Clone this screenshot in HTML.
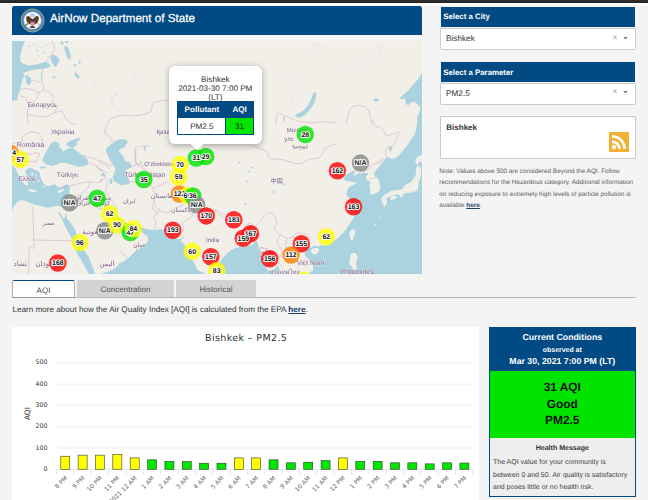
<!DOCTYPE html>
<html lang="en"><head><meta charset="utf-8"><title>AirNow Department of State</title>
<style>
html,body{margin:0;padding:0;}
*{text-rendering:geometricPrecision;}
svg text{text-rendering:geometricPrecision;}
body{width:648px;height:500px;overflow:hidden;background:#f4f4f4;position:relative;font-family:"Liberation Sans",Arial,sans-serif;color:#333;}
.abs{position:absolute;}
#topbar{left:0;top:0;width:648px;height:2.5px;background:#2b2b2b;}
#topwhite{left:0;top:2.5px;width:648px;height:1.9px;background:#fff;}
#topwhite2{left:11.8px;top:4.3px;width:637px;height:1.6px;background:linear-gradient(#fff,#fafafa);}
#topbar{background:linear-gradient(#2e2e2e,#2b2b2b 70%,#1c1c1c);}
#hdr{left:12px;top:6px;width:410px;height:29px;background:#024a83;border-radius:2.5px 2.5px 0 0;}
#hdr .ttl{position:absolute;left:38px;top:0;line-height:26px;font-size:11.65px;color:#fff;white-space:nowrap;-webkit-text-stroke:0.25px #fff;}
#map{left:12px;top:41px;width:410px;height:232.7px;overflow:hidden;background:#f2efe9;}
.bar{background:#024a83;color:#fff;font-weight:bold;font-size:7.85px;white-space:nowrap;}
.bar span{position:absolute;left:2.6px;top:0;}
.dd{background:#fff;border:0.5px solid #ccc;border-radius:2px;box-sizing:border-box;font-size:8.2px;color:#333;}
.dd span{position:absolute;left:4.9px;top:0;}
a{color:#1b3c6a;font-weight:bold;text-decoration:underline;}
.tab{font-size:8px;color:#555;text-align:center;line-height:17.6px;}
.tab span{display:block;}

</style></head>
<body>
<div id="topbar" class="abs"></div>
<div id="topwhite" class="abs"></div>
<div id="topwhite2" class="abs"></div>
<div id="hdr" class="abs">
<svg class="abs" style="left:8.4px;top:1.9px" width="25" height="25" viewBox="-12.5 -12.5 25 25">
<circle r="11.9" fill="#2c66ad"/><circle r="11.5" fill="none" stroke="#d8c84e" stroke-width="0.7"/>
<circle r="10.1" fill="none" stroke="#8fb3dc" stroke-width="1.3" stroke-dasharray="0.9 0.7" opacity="0.75"/>
<circle r="8.8" fill="#f6f7f8"/><circle r="8.9" fill="none" stroke="#b9cfe6" stroke-width="0.5"/>
<circle cx="0" cy="-4.9" r="2.3" fill="#a9cde8"/>
<path d="M-1-1.8 Q-3.6-6-6.3-3.6 Q-6.8-0.4-4.8 2.6 L-2.2 4.2 L-1.4 1 Z" fill="#5e3c1c"/>
<path d="M1-1.8 Q3.6-6 6.3-3.6 Q6.8-0.4 4.8 2.6 L2.2 4.2 L1.4 1 Z" fill="#5e3c1c"/>
<ellipse cx="0" cy="0.8" rx="1.9" ry="3.6" fill="#3a2a1c"/>
<circle cx="0" cy="-2.4" r="1.1" fill="#fff"/>
<path d="M-2 0.3 h4 v2.6 q0 1.8-2 2.5 q-2-0.7-2-2.5z" fill="#ee8a8e"/><rect x="-2" y="0.3" width="4" height="1.3" fill="#2b4fa0"/>
<path d="M-4.6 3.2 q-2.4 0.6-3 3" stroke="#3f8a3f" stroke-width="1.3" fill="none"/>
<path d="M4.6 3.2 l2.8 2.4 M5.2 2.6 l2.8 2.2" stroke="#8a8a8a" stroke-width="0.5" fill="none"/>
<path d="M-1.4 5.2 l-1.4 2.2 h5.6 l-1.4-2.2z" fill="#5a4630"/>
</svg>
<div class="ttl">AirNow Department of State</div>
</div>
<div id="map" class="abs">
<svg class="abs" style="left:0;top:0" width="410" height="232.7" viewBox="0 0 410 232.7">
<defs><filter id="bl" x="-5%" y="-5%" width="110%" height="110%"><feGaussianBlur stdDeviation="0.35"/></filter><filter id="bl2" x="-10%" y="-10%" width="120%" height="120%"><feGaussianBlur stdDeviation="0.3"/></filter></defs>
<g filter="url(#bl)">
<rect x="-5" y="-5" width="420" height="245" fill="#f2efe9"/>
<path d="M-1.4 -1.4C0.9 -11.5 10.1 -2.1 12.3 -1.4C14.5 -0.7 12.2 1.4 11.9 2.8C11.6 4.2 11.0 5.4 10.5 7.0C10.0 8.6 9.1 10.8 8.7 12.6C8.3 14.3 8.1 16.1 8.1 17.5C8.1 18.9 7.9 20.0 8.7 21.0C9.4 21.9 11.2 22.5 12.6 23.1C13.9 23.7 15.2 24.4 16.8 24.5C18.4 24.6 20.5 24.1 22.4 23.8C24.2 23.4 26.0 22.8 28.0 22.4C30.0 21.9 32.6 20.7 34.3 21.0C35.9 21.3 37.5 23.2 38.0 24.1C38.6 24.9 38.7 25.3 37.5 25.9C36.3 26.5 33.1 27.2 30.8 27.7C28.5 28.1 26.1 28.2 23.8 28.5C21.4 28.9 18.5 29.4 16.8 29.9C15.0 30.4 13.5 31.0 13.3 31.5C13.1 32.0 15.0 32.3 15.4 32.9C15.8 33.4 15.2 34.3 15.7 35.0C16.1 35.6 17.6 35.7 18.2 36.6C18.8 37.6 19.4 39.3 19.3 40.6C19.2 41.8 18.2 43.7 17.5 44.1C16.8 44.4 15.7 43.5 15.1 42.7C14.5 41.8 13.9 40.2 13.7 39.2C13.5 38.1 14.4 36.8 14.0 36.4C13.6 35.9 11.8 35.9 11.2 36.6C10.5 37.3 10.5 39.2 10.1 40.6C9.7 41.9 9.0 43.4 8.7 44.8C8.3 46.2 8.6 47.3 8.1 49.0C7.6 50.6 6.1 52.9 5.6 54.5C5.1 56.2 6.1 57.9 5.3 58.7C4.6 59.6 2.2 59.3 1.1 59.4C-0.0 59.6 -1.0 69.6 -1.4 59.4C-1.8 49.3 -3.7 8.7 -1.4 -1.4Z" fill="#aad3df"/>
<path d="M38.5 15.4C38.8 14.2 40.8 13.9 42.0 14.0C43.1 14.1 44.5 15.0 45.5 16.1C46.4 17.1 47.6 19.1 47.6 20.3C47.6 21.4 46.0 22.1 45.5 23.1C44.9 24.0 44.6 25.6 44.1 25.9C43.5 26.1 42.7 25.3 42.0 24.5C41.3 23.7 40.4 22.5 39.9 21.0C39.3 19.5 38.1 16.6 38.5 15.4Z" fill="#aad3df"/>
<path d="M52.4 6.3C52.7 5.1 54.4 5.0 55.2 5.6C56.1 6.2 56.8 8.3 57.3 9.8C57.9 11.3 58.6 13.3 58.7 14.7C58.9 16.1 58.5 17.7 58.0 18.2C57.6 18.6 56.6 18.4 55.9 17.5C55.2 16.6 54.4 14.5 53.8 12.6C53.3 10.7 52.2 7.5 52.4 6.3Z" fill="#aad3df"/>
<path d="M28.7 32.2C28.7 31.1 29.3 31.0 29.7 31.9C30.0 32.8 30.5 36.7 30.5 37.8C30.4 38.9 29.7 39.4 29.4 38.5C29.1 37.5 28.6 33.3 28.7 32.2Z" fill="#aad3df"/>
<path d="M40.8 35.5C41.2 35.2 42.9 35.2 43.3 35.5C43.8 35.8 43.8 36.8 43.3 37.0C42.9 37.2 41.2 37.2 40.8 37.0C40.4 36.8 40.4 35.8 40.8 35.5Z" fill="#aad3df"/>
<path d="M62.5 31.7C62.8 31.3 64.2 31.8 65.0 32.5C65.8 33.2 67.4 35.0 67.5 35.8C67.6 36.7 66.5 37.6 65.8 37.5C65.1 37.4 63.9 36.0 63.3 35.0C62.8 34.0 62.2 32.1 62.5 31.7Z" fill="#aad3df"/>
<path d="M48.3 0.8C48.6 0.4 50.3 0.1 50.8 0.5C51.4 0.9 51.9 2.5 51.7 3.0C51.4 3.5 49.7 3.7 49.2 3.3C48.6 3.0 48.1 1.3 48.3 0.8Z" fill="#aad3df"/>
<path d="M53.0 -0.8C53.5 -1.3 55.7 -1.3 56.2 -0.8C56.6 -0.4 56.3 1.2 55.8 1.7C55.4 2.1 53.8 2.1 53.3 1.7C52.9 1.2 52.5 -0.4 53.0 -0.8Z" fill="#aad3df"/>
<path d="M62.0 23.3C62.4 23.1 63.8 23.1 64.2 23.3C64.5 23.6 64.5 24.7 64.2 25.0C63.8 25.3 62.4 25.3 62.0 25.0C61.6 24.7 61.6 23.6 62.0 23.3Z" fill="#aad3df"/>
<path d="M66.7 20.0C66.9 19.6 68.1 19.6 68.3 20.0C68.6 20.4 68.6 22.1 68.3 22.5C68.1 22.9 67.3 22.9 67.0 22.5C66.7 22.1 66.4 20.4 66.7 20.0Z" fill="#aad3df"/>
<path d="M15.8 5.0C15.8 4.7 16.4 4.2 16.7 4.2C16.9 4.2 17.5 4.7 17.5 5.0C17.5 5.3 16.9 6.2 16.7 6.2C16.4 6.2 15.8 5.3 15.8 5.0Z" fill="#aad3df"/>
<path d="M21.0 3.3C21.0 3.1 21.4 2.7 21.7 2.7C21.9 2.7 22.3 3.1 22.3 3.3C22.3 3.6 21.9 4.3 21.7 4.3C21.4 4.3 21.0 3.6 21.0 3.3Z" fill="#aad3df"/>
<path d="M24.2 9.2C24.2 8.8 24.7 8.3 25.0 8.3C25.3 8.3 25.8 8.8 25.8 9.2C25.8 9.5 25.3 10.3 25.0 10.3C24.7 10.3 24.2 9.5 24.2 9.2Z" fill="#aad3df"/>
<path d="M28.5 6.7C28.5 6.4 28.9 6.0 29.2 6.0C29.4 6.0 29.8 6.4 29.8 6.7C29.8 6.9 29.4 7.6 29.2 7.6C28.9 7.6 28.5 6.9 28.5 6.7Z" fill="#aad3df"/>
<path d="M30.8 11.7C30.8 11.3 31.4 10.8 31.7 10.8C31.9 10.8 32.5 11.3 32.5 11.7C32.5 12.0 31.9 12.8 31.7 12.8C31.4 12.8 30.8 12.0 30.8 11.7Z" fill="#aad3df"/>
<path d="M33.5 3.3C33.5 3.1 33.9 2.7 34.2 2.7C34.4 2.7 34.8 3.1 34.8 3.3C34.8 3.6 34.4 4.3 34.2 4.3C33.9 4.3 33.5 3.6 33.5 3.3Z" fill="#aad3df"/>
<path d="M26.0 15.0C26.0 14.7 26.4 14.3 26.7 14.3C26.9 14.3 27.3 14.7 27.3 15.0C27.3 15.3 26.9 15.9 26.7 15.9C26.4 15.9 26.0 15.3 26.0 15.0Z" fill="#aad3df"/>
<path d="M19.5 12.5C19.5 12.3 19.8 12.0 20.0 12.0C20.2 12.0 20.5 12.3 20.5 12.5C20.5 12.7 20.2 13.2 20.0 13.2C19.8 13.2 19.5 12.7 19.5 12.5Z" fill="#aad3df"/>
<path d="M35.2 15.8C35.2 15.6 35.6 15.2 35.8 15.2C36.1 15.2 36.5 15.6 36.5 15.8C36.5 16.1 36.1 16.8 35.8 16.8C35.6 16.8 35.2 16.1 35.2 15.8Z" fill="#aad3df"/>
<path d="M22.8 18.3C22.8 18.1 23.2 17.8 23.3 17.8C23.5 17.8 23.8 18.1 23.8 18.3C23.8 18.5 23.5 19.0 23.3 19.0C23.2 19.0 22.8 18.5 22.8 18.3Z" fill="#aad3df"/>
<path d="M29.5 17.5C29.5 17.3 29.8 17.0 30.0 17.0C30.2 17.0 30.5 17.3 30.5 17.5C30.5 17.7 30.2 18.2 30.0 18.2C29.8 18.2 29.5 17.7 29.5 17.5Z" fill="#aad3df"/>
<path d="M49.5 12.5C49.5 12.3 49.8 12.0 50.0 12.0C50.2 12.0 50.5 12.3 50.5 12.5C50.5 12.7 50.2 13.2 50.0 13.2C49.8 13.2 49.5 12.7 49.5 12.5Z" fill="#aad3df"/>
<path d="M47.8 9.2C47.8 9.0 48.2 8.7 48.3 8.7C48.5 8.7 48.8 9.0 48.8 9.2C48.8 9.4 48.5 9.9 48.3 9.9C48.2 9.9 47.8 9.4 47.8 9.2Z" fill="#aad3df"/>
<path d="M283.5 73.8C284.3 72.7 288.4 72.0 290.7 70.0C293.0 68.0 295.5 65.0 297.3 62.0C299.1 59.0 300.4 53.8 301.5 52.0C302.6 50.2 303.5 50.4 303.8 51.3C304.2 52.3 304.4 55.0 303.7 57.5C303.0 60.0 301.5 63.6 299.7 66.3C297.8 69.1 294.9 72.4 292.7 74.2C290.4 75.9 287.5 76.7 286.0 76.7C284.5 76.6 282.7 74.9 283.5 73.8Z" fill="#aad3df"/>
<path d="M271.5 75.8C271.7 75.1 272.5 75.1 272.7 75.8C272.9 76.5 272.8 79.3 272.7 80.0C272.5 80.7 271.9 80.7 271.7 80.0C271.5 79.3 271.3 76.5 271.5 75.8Z" fill="#aad3df"/>
<path d="M412.3 31.7C411.5 25.6 409.0 34.9 407.3 36.7C405.7 38.5 404.3 40.3 402.3 42.5C400.4 44.7 398.0 47.6 395.7 50.0C393.3 52.4 389.0 55.3 388.2 56.7C387.3 58.1 389.8 58.2 390.7 58.3C391.5 58.5 392.6 56.8 393.2 57.5C393.7 58.2 393.4 61.4 394.0 62.5C394.6 63.6 395.7 64.3 396.5 64.2C397.3 64.0 398.0 62.2 399.0 61.7C400.0 61.1 401.2 60.6 402.3 60.8C403.4 61.1 404.7 62.4 405.7 63.3C406.6 64.3 407.7 65.0 408.2 66.7C408.7 68.3 408.0 72.2 408.7 73.3C409.4 74.4 411.7 80.3 412.3 73.3C412.9 66.4 413.2 37.8 412.3 31.7Z" fill="#aad3df"/>
<path d="M406.5 75.0C407.1 74.1 408.0 73.1 409.0 73.0C410.0 72.9 411.8 72.2 412.3 74.2C412.9 76.2 413.3 83.2 412.3 85.0C411.4 86.8 407.6 86.1 406.5 85.0C405.4 83.9 405.7 80.0 405.7 78.3C405.7 76.7 405.9 75.9 406.5 75.0Z" fill="#aad3df"/>
<path d="M362.0 58.3C362.6 57.8 365.8 57.3 366.5 57.5C367.2 57.7 367.1 59.1 366.5 59.7C365.9 60.2 363.4 61.1 362.7 60.8C361.9 60.6 361.4 58.9 362.0 58.3Z" fill="#aad3df"/>
<path d="M30.7 118.4C30.9 117.4 31.7 115.4 32.3 114.0C33.0 112.6 33.8 111.4 34.6 110.1C35.3 108.8 36.1 107.4 36.8 106.2C37.4 105.0 37.8 103.8 38.4 102.9C39.1 102.0 39.8 101.1 40.7 100.7C41.5 100.3 42.6 100.3 43.4 100.4C44.3 100.6 45.0 101.2 45.7 101.8C46.4 102.3 47.3 103.1 47.6 103.8C47.8 104.5 46.7 105.3 47.1 106.0C47.5 106.7 49.1 107.0 49.8 107.8C50.5 108.5 50.5 110.3 51.2 110.4C51.9 110.6 53.1 109.2 54.0 108.7C54.9 108.1 55.9 107.6 56.8 107.3C57.7 107.0 59.2 107.1 59.3 106.9C59.4 106.6 58.0 106.1 57.3 105.8C56.6 105.4 55.6 105.1 55.1 104.7C54.6 104.2 54.4 103.5 54.6 102.9C54.7 102.3 55.4 101.8 56.2 101.2C57.1 100.7 58.4 100.0 59.6 99.6C60.7 99.1 61.7 98.9 62.9 98.4C64.1 98.0 65.9 97.3 66.8 97.1C67.7 97.0 68.4 97.1 68.4 97.6C68.4 98.0 67.4 98.9 66.8 99.6C66.1 100.2 64.8 100.6 64.6 101.2C64.3 101.9 65.4 102.8 65.1 103.4C64.8 104.1 63.5 104.8 62.9 105.3C62.2 105.9 61.3 106.2 61.2 106.7C61.1 107.1 61.6 107.2 62.3 107.9C63.1 108.6 64.6 109.8 65.7 110.7C66.7 111.5 67.4 112.1 68.4 112.9C69.5 113.6 70.8 114.4 71.8 115.1C72.8 115.9 73.8 116.5 74.6 117.3C75.3 118.2 76.0 119.2 76.2 120.1C76.5 121.0 76.4 122.1 76.0 122.9C75.6 123.6 74.9 124.1 74.0 124.6C73.1 125.0 72.0 125.1 70.7 125.3C69.4 125.5 67.7 125.8 66.2 125.7C64.7 125.5 63.3 125.0 61.8 124.6C60.3 124.1 58.7 123.6 57.3 123.1C55.9 122.6 54.7 122.0 53.4 121.8C52.1 121.6 50.8 121.6 49.6 121.8C48.4 122.0 47.3 122.5 46.2 122.9C45.1 123.3 44.0 123.9 42.9 124.2C41.8 124.6 40.7 124.9 39.6 124.9C38.4 124.9 37.3 124.4 36.2 124.0C35.1 123.6 33.8 123.0 32.9 122.3C32.0 121.7 31.3 120.8 30.9 120.1C30.5 119.5 30.4 119.5 30.7 118.4Z" fill="#aad3df"/>
<path d="M89.7 132.7C90.2 132.3 92.2 132.3 92.7 132.7C93.2 133.1 93.2 134.6 92.7 135.0C92.2 135.4 90.2 135.4 89.7 135.0C89.2 134.6 89.2 133.1 89.7 132.7Z" fill="#aad3df"/>
<path d="M97.5 138.0C97.9 137.3 99.6 137.3 100.0 138.0C100.4 138.7 100.4 141.6 100.0 142.3C99.6 143.1 98.2 143.1 97.8 142.3C97.4 141.6 97.1 138.7 97.5 138.0Z" fill="#aad3df"/>
<path d="M-2.4 125.4C-1.6 118.4 1.3 125.9 2.4 126.6C3.5 127.3 3.6 128.5 4.2 129.6C4.8 130.7 5.4 132.1 6.0 133.2C6.6 134.3 7.2 135.1 7.8 136.2C8.4 137.3 8.9 138.7 9.6 139.8C10.3 140.9 11.2 142.0 12.0 142.8C12.8 143.6 13.7 144.5 14.4 144.6C15.1 144.7 16.1 144.0 16.2 143.4C16.3 142.8 14.8 141.5 15.0 141.0C15.2 140.5 16.9 140.9 17.4 140.4C17.9 139.9 18.2 138.7 18.0 138.0C17.8 137.3 16.8 136.9 16.2 136.2C15.6 135.5 14.9 134.7 14.4 133.8C13.9 132.9 13.2 131.7 13.2 130.8C13.2 129.9 13.8 129.0 14.4 128.4C15.0 127.8 15.9 127.4 16.8 127.2C17.7 127.0 18.9 127.0 19.8 127.2C20.7 127.4 21.4 128.3 22.2 128.6C23.0 129.0 23.9 129.1 24.6 129.4C25.4 129.6 26.2 129.9 26.7 130.3C27.2 130.8 27.4 131.2 27.6 132.0C27.9 132.8 27.9 134.0 28.2 135.0C28.5 136.0 29.0 137.0 29.4 138.0C29.8 139.0 30.1 140.1 30.6 141.0C31.1 141.9 31.7 142.8 32.4 143.4C33.1 144.0 34.0 144.3 34.8 144.6C35.6 144.9 36.3 145.3 37.2 145.2C38.1 145.1 39.3 144.3 40.2 144.0C41.1 143.7 41.8 143.2 42.6 143.4C43.4 143.6 44.1 144.7 45.0 145.2C45.9 145.7 47.0 146.4 48.0 146.4C49.0 146.4 50.0 145.7 51.0 145.2C52.0 144.7 53.1 143.6 54.0 143.4C54.9 143.2 55.8 143.4 56.4 144.0C57.0 144.6 57.5 145.9 57.6 147.0C57.8 148.1 57.5 149.4 57.4 150.6C57.3 151.8 57.2 153.3 57.0 154.2C56.9 155.1 56.6 154.7 56.4 156.0C56.2 157.3 56.2 160.4 55.8 162.0C55.4 163.6 54.9 164.9 54.0 165.6C53.1 166.3 51.8 166.3 50.4 166.2C49.0 166.1 47.2 165.1 45.6 165.0C44.0 164.9 42.4 165.3 40.8 165.6C39.2 165.9 37.6 166.8 36.0 166.8C34.4 166.8 32.8 166.0 31.2 165.6C29.6 165.2 28.0 164.8 26.4 164.4C24.8 164.0 23.2 163.7 21.6 163.2C20.0 162.7 18.4 162.0 16.8 161.4C15.2 160.8 13.4 159.9 12.0 159.6C10.6 159.3 9.6 159.3 8.4 159.6C7.2 159.9 5.8 160.6 4.8 161.4C3.8 162.2 3.6 163.2 2.4 164.4C1.2 165.6 -1.6 175.1 -2.4 168.6C-3.2 162.1 -3.2 132.4 -2.4 125.4Z" fill="#aad3df"/>
<path d="M28.2 125.8C28.9 125.4 32.2 125.3 33.0 125.5C33.9 125.7 34.1 126.6 33.4 127.0C32.7 127.3 29.7 127.6 28.8 127.4C28.0 127.2 27.5 126.1 28.2 125.8Z" fill="#aad3df"/>
<path d="M105.7 98.9C106.8 98.6 108.7 98.3 110.1 98.3C111.4 98.3 112.8 98.4 113.8 98.7C114.7 99.0 115.4 99.5 115.6 100.2C115.8 100.8 115.4 102.0 115.0 102.6C114.6 103.3 113.3 103.5 113.2 103.9C113.1 104.3 114.6 104.7 114.4 105.1C114.2 105.5 112.7 106.0 111.9 106.4C111.1 106.8 110.2 107.2 109.4 107.6C108.7 108.0 108.1 108.3 107.6 108.9C107.1 109.4 106.2 110.2 106.3 110.7C106.4 111.2 107.6 111.4 108.2 112.0C108.8 112.5 109.4 113.0 110.1 113.8C110.7 114.6 111.4 115.9 111.9 116.9C112.4 117.9 112.6 119.4 113.2 120.0C113.7 120.6 114.3 120.4 115.0 120.6C115.7 120.8 116.8 120.6 117.5 121.3C118.2 121.9 118.9 123.5 119.4 124.4C119.8 125.2 120.3 125.8 120.0 126.2C119.7 126.6 118.3 126.4 117.5 126.8C116.7 127.3 115.7 128.1 115.0 128.7C114.3 129.3 113.3 129.7 113.2 130.6C113.1 131.4 113.9 132.6 114.4 133.7C114.9 134.7 115.7 135.6 116.3 136.8C116.8 137.9 117.4 139.5 117.5 140.5C117.6 141.5 117.5 142.5 116.9 143.0C116.3 143.5 114.9 143.4 113.8 143.6C112.6 143.8 111.2 144.3 110.1 144.2C108.9 144.1 108.0 143.5 107.0 143.0C105.9 142.5 104.8 141.7 103.9 141.1C102.9 140.5 101.9 140.1 101.4 139.2C100.9 138.4 100.6 137.3 100.7 136.1C100.9 135.0 101.6 133.6 102.0 132.4C102.4 131.3 103.1 130.4 103.2 129.3C103.3 128.3 103.0 127.3 102.6 126.2C102.2 125.2 101.5 124.3 100.7 123.1C100.0 122.0 99.0 120.6 98.3 119.4C97.5 118.2 96.9 116.8 96.4 115.7C95.9 114.5 95.6 113.6 95.2 112.6C94.8 111.5 93.9 110.5 93.9 109.5C93.9 108.4 94.5 107.2 95.2 106.4C95.8 105.5 96.7 105.2 97.6 104.5C98.6 103.8 99.8 102.8 100.7 102.0C101.7 101.3 102.4 100.7 103.2 100.2C104.1 99.6 104.6 99.2 105.7 98.9Z" fill="#aad3df"/>
<path d="M131.9 105.4C132.1 104.8 132.8 104.8 133.1 105.1C133.4 105.5 133.7 106.8 133.6 107.6C133.5 108.4 132.9 109.6 132.6 109.8C132.3 110.1 131.9 109.6 131.8 108.9C131.6 108.1 131.7 106.0 131.9 105.4Z" fill="#aad3df"/>
<path d="M127.8 120.6C128.0 120.2 129.0 120.1 129.3 120.4C129.6 120.7 129.6 122.1 129.4 122.5C129.2 122.9 128.3 123.1 128.0 122.7C127.8 122.4 127.6 121.0 127.8 120.6Z" fill="#aad3df"/>
<path d="M88.6 138.0C88.7 137.4 89.3 137.5 89.5 138.0C89.6 138.5 89.8 140.6 89.7 141.1C89.6 141.7 89.1 141.9 89.0 141.4C88.8 140.8 88.5 138.6 88.6 138.0Z" fill="#aad3df"/>
<path d="M88.3 127.5C88.4 127.2 88.9 127.2 89.1 127.5C89.2 127.8 89.3 129.0 89.2 129.3C89.1 129.6 88.6 129.6 88.5 129.3C88.3 129.0 88.2 127.8 88.3 127.5Z" fill="#aad3df"/>
<path d="M269.3 142.2C269.6 142.0 271.3 142.2 271.8 142.7C272.4 143.1 272.9 144.5 272.7 144.7C272.4 144.9 270.7 144.2 270.2 143.8C269.6 143.4 269.1 142.4 269.3 142.2Z" fill="#aad3df"/>
<path d="M235.5 130.5C235.5 130.2 236.4 129.7 236.8 129.7C237.3 129.7 238.2 130.2 238.2 130.5C238.2 130.8 237.3 131.3 236.8 131.3C236.4 131.3 235.5 130.8 235.5 130.5Z" fill="#aad3df"/>
<path d="M238.8 126.7C238.8 126.4 239.7 125.8 240.2 125.8C240.6 125.8 241.5 126.4 241.5 126.7C241.5 126.9 240.6 127.5 240.2 127.5C239.7 127.5 238.8 126.9 238.8 126.7Z" fill="#aad3df"/>
<path d="M226.0 121.7C226.0 121.4 226.9 120.8 227.3 120.8C227.8 120.8 228.7 121.4 228.7 121.7C228.7 121.9 227.8 122.5 227.3 122.5C226.9 122.5 226.0 121.9 226.0 121.7Z" fill="#aad3df"/>
<path d="M233.8 140.5C233.8 140.2 234.7 139.7 235.2 139.7C235.6 139.7 236.5 140.2 236.5 140.5C236.5 140.8 235.6 141.3 235.2 141.3C234.7 141.3 233.8 140.8 233.8 140.5Z" fill="#aad3df"/>
<path d="M260.5 151.0C260.5 150.7 261.4 150.2 261.8 150.2C262.3 150.2 263.2 150.7 263.2 151.0C263.2 151.3 262.3 151.8 261.8 151.8C261.4 151.8 260.5 151.3 260.5 151.0Z" fill="#aad3df"/>
<path d="M232.2 163.0C232.2 162.7 233.1 162.2 233.5 162.2C233.9 162.2 234.8 162.7 234.8 163.0C234.8 163.3 233.9 163.8 233.5 163.8C233.1 163.8 232.2 163.3 232.2 163.0Z" fill="#aad3df"/>
<path d="M414.0 75.0C412.6 47.7 407.0 74.3 405.6 75.0C404.2 75.7 405.5 77.6 405.4 79.0C405.3 80.4 405.2 81.7 405.0 83.2C404.8 84.7 404.5 86.7 404.1 88.2C403.8 89.7 403.5 91.0 402.9 92.4C402.3 93.8 401.1 95.3 400.3 96.6C399.5 97.9 398.6 99.1 397.8 100.4C397.0 101.7 396.3 102.9 395.3 104.2C394.3 105.5 392.9 107.1 391.9 108.4C390.8 109.7 390.0 111.1 389.0 112.2C388.0 113.3 387.2 114.3 386.1 115.1C385.1 115.9 383.8 116.8 382.7 117.2C381.6 117.6 380.7 117.8 379.7 117.7C378.7 117.6 377.6 116.6 376.8 116.4C376.0 116.2 375.7 116.2 375.0 116.6C374.3 117.0 373.6 118.0 372.7 119.0C371.8 120.0 370.9 121.1 369.9 122.3C368.9 123.5 367.6 124.9 366.6 126.1C365.6 127.3 364.6 128.4 363.9 129.4C363.2 130.4 362.4 131.3 362.2 132.2C362.0 133.1 362.3 134.2 362.8 134.9C363.3 135.6 364.4 135.9 365.0 136.6C365.6 137.3 366.2 138.3 366.6 139.3C367.1 140.3 367.4 141.5 367.7 142.6C368.0 143.7 368.3 144.8 368.3 145.9C368.3 147.0 368.2 148.3 367.7 149.2C367.2 150.1 366.1 150.9 365.5 151.4C364.9 151.9 364.6 151.9 363.9 152.2C363.2 152.4 362.0 152.8 361.1 152.9C360.2 153.0 358.8 153.6 358.3 152.9C357.8 152.2 358.4 150.1 358.3 148.7C358.2 147.3 357.6 145.8 357.6 144.5C357.6 143.2 358.7 141.8 358.3 141.0C357.9 140.2 356.2 140.4 355.5 139.6C354.8 138.8 354.0 137.1 354.1 136.1C354.2 135.1 356.2 134.0 356.2 133.3C356.2 132.6 355.0 132.1 354.1 131.9C353.2 131.7 351.9 131.8 350.6 131.9C349.3 132.0 347.7 132.1 346.4 132.6C345.1 133.1 343.7 134.6 342.9 134.7C342.1 134.8 341.4 134.0 341.5 133.3C341.6 132.6 343.7 131.0 343.6 130.5C343.5 130.0 341.9 129.9 340.8 130.1C339.8 130.3 338.5 131.2 337.3 131.9C336.1 132.6 334.7 133.1 333.8 134.0C332.9 134.9 331.6 136.5 331.7 137.5C331.8 138.5 333.2 139.4 334.5 139.9C335.8 140.4 337.6 140.4 339.4 140.7C341.1 141.0 344.6 141.1 345.0 141.7C345.4 142.3 342.7 143.5 341.5 144.1C340.3 144.7 339.1 144.3 338.0 145.2C336.9 146.1 335.8 148.0 335.2 149.4C334.6 150.8 334.1 152.2 334.5 153.6C334.9 155.0 336.5 156.6 337.3 157.8C338.1 159.0 338.0 158.7 339.4 160.6C340.8 162.5 345.2 166.5 345.7 169.0C346.2 171.5 343.4 173.8 342.3 175.7C341.2 177.6 340.2 178.8 339.0 180.7C337.8 182.6 336.2 185.4 334.8 187.3C333.4 189.2 332.1 190.8 330.7 192.3C329.3 193.8 327.9 195.3 326.5 196.5C325.1 197.7 323.5 198.7 322.3 199.5C321.1 200.3 320.6 200.6 319.3 201.5C318.0 202.4 316.0 204.4 314.3 204.8C312.6 205.2 310.7 203.8 309.3 204.0C307.9 204.2 307.1 205.6 306.0 205.7C304.9 205.8 303.8 204.7 302.7 204.8C301.6 204.9 300.3 206.3 299.3 206.5C298.3 206.7 297.3 205.5 296.5 206.0C295.7 206.5 295.1 208.3 294.5 209.5C293.9 210.7 292.9 212.0 292.8 213.2C292.8 214.3 293.3 215.3 294.2 216.4C295.1 217.5 296.9 218.3 298.0 219.6C299.1 220.9 300.1 222.5 300.7 224.0C301.2 225.5 301.1 226.0 301.3 228.5C301.5 231.0 283.0 237.2 301.8 239.0C320.6 240.8 395.3 266.3 414.0 239.0C432.7 211.7 415.4 102.3 414.0 75.0Z" fill="#aad3df"/>
<path d="M377.2 106.3C377.5 105.8 379.3 105.8 379.7 106.3C380.2 106.8 380.1 108.7 379.7 109.3C379.4 109.8 378.2 110.2 377.8 109.7C377.4 109.2 376.9 106.9 377.2 106.3Z" fill="#aad3df"/>
<path d="M45.7 171.3C45.9 172.1 47.5 174.2 48.3 175.5C49.1 176.8 49.8 177.8 50.5 179.3C51.2 180.8 52.1 182.9 52.8 184.5C53.6 186.1 54.1 187.4 55.0 189.0C55.9 190.6 57.1 192.7 58.0 194.3C58.9 196.0 59.6 197.2 60.3 198.8C61.1 200.4 61.9 202.1 62.5 204.0C63.1 205.9 63.4 208.2 64.0 210.0C64.6 211.8 65.4 213.0 66.3 214.5C67.2 216.0 68.3 217.2 69.3 219.0C70.3 220.8 71.2 223.0 72.3 225.0C73.4 227.0 75.0 229.4 76.0 231.0C77.0 232.6 77.1 234.2 78.3 234.8C79.6 235.5 83.0 236.0 83.5 234.8C84.0 233.7 82.1 230.1 81.3 228.0C80.6 225.9 79.8 224.0 79.0 222.0C78.2 220.0 77.8 217.9 76.8 216.0C75.8 214.1 74.1 212.6 73.0 210.8C71.9 209.1 70.9 207.2 70.0 205.5C69.1 203.8 68.6 202.1 67.8 200.3C67.1 198.6 66.2 196.8 65.5 195.0C64.8 193.2 64.2 191.6 63.3 189.8C62.5 188.1 61.3 186.1 60.3 184.5C59.3 182.9 58.2 181.1 57.3 180.0C56.4 178.9 55.4 178.8 55.0 177.8C54.6 176.8 54.9 174.8 54.7 174.0C54.4 173.2 53.8 172.8 53.5 173.3C53.2 173.8 53.2 176.4 52.8 177.0C52.5 177.6 52.0 177.6 51.3 177.0C50.7 176.4 49.8 174.3 49.0 173.3C48.2 172.3 47.4 171.3 46.8 171.0C46.3 170.7 45.4 170.6 45.7 171.3Z" fill="#aad3df"/>
<path d="M110.0 224.0C108.9 222.9 105.3 226.4 103.3 227.3C101.4 228.3 100.0 229.1 98.3 229.8C96.7 230.5 95.0 230.8 93.3 231.5C91.7 232.2 85.6 233.6 88.3 234.0C91.1 234.4 106.4 235.7 110.0 234.0C113.6 232.3 111.1 225.1 110.0 224.0Z" fill="#aad3df"/>
<path d="M106.3 224.0C107.4 221.6 111.1 221.2 113.0 219.8C114.9 218.4 116.3 217.2 118.0 215.7C119.7 214.1 121.3 212.1 123.0 210.7C124.7 209.3 126.3 208.6 128.0 207.3C129.7 206.1 131.6 204.6 133.0 203.2C134.4 201.8 136.1 200.4 136.3 199.0C136.6 197.6 135.5 195.9 134.7 194.8C133.8 193.7 132.3 193.2 131.3 192.3C130.4 191.5 129.5 190.7 128.8 189.8C128.1 189.0 126.9 187.9 127.2 187.3C127.4 186.8 129.2 186.4 130.5 186.5C131.8 186.6 132.9 187.8 134.7 188.2C136.5 188.6 139.1 189.0 141.3 189.0C143.6 189.0 146.1 188.2 148.0 188.2C149.9 188.2 151.3 188.3 153.0 189.0C154.7 189.7 156.3 191.1 158.0 192.3C159.7 193.6 161.6 195.5 163.0 196.5C164.4 197.5 164.8 198.2 166.3 198.2C167.9 198.2 171.8 196.2 172.2 196.5C172.6 196.8 168.8 198.7 168.8 199.8C168.8 200.9 171.2 201.9 172.2 203.2C173.1 204.4 173.7 205.5 174.7 207.3C175.6 209.1 176.8 211.5 178.0 214.0C179.2 216.5 180.9 219.8 182.2 222.3C183.4 224.8 184.5 227.1 185.5 229.0C186.5 230.9 201.2 233.2 188.0 234.0C174.8 234.8 119.9 235.7 106.3 234.0C92.7 232.3 105.2 226.4 106.3 224.0Z" fill="#aad3df"/>
<path d="M99.7 170.7C100.2 170.1 101.9 170.7 103.0 171.5C104.1 172.3 105.2 174.6 106.3 175.7C107.4 176.8 108.3 177.1 109.7 178.2C111.1 179.3 112.7 181.4 114.7 182.3C116.6 183.3 119.4 183.4 121.3 184.0C123.3 184.6 124.9 185.2 126.3 185.7C127.7 186.2 129.4 186.3 129.7 187.0C129.9 187.7 128.8 188.9 128.0 189.8C127.2 190.7 125.9 191.5 124.7 192.3C123.4 193.2 121.9 194.6 120.5 194.8C119.1 195.1 117.6 194.6 116.3 194.0C115.1 193.4 114.1 191.8 113.0 191.5C111.9 191.2 110.6 192.8 109.7 192.3C108.7 191.9 108.0 190.4 107.2 189.0C106.3 187.6 105.5 185.7 104.7 184.0C103.8 182.3 103.0 180.5 102.2 179.0C101.3 177.5 100.1 176.2 99.7 174.8C99.2 173.4 99.1 171.2 99.7 170.7Z" fill="#aad3df"/>
<path d="M201.5 238.1C190.6 236.8 202.4 232.8 203.0 230.7C203.6 228.5 204.2 227.0 205.2 225.1C206.2 223.3 207.5 221.4 208.9 219.6C210.3 217.7 211.7 215.8 213.6 214.0C215.4 212.2 217.9 210.1 220.0 208.8C222.2 207.5 224.4 206.7 226.5 206.2C228.7 205.7 230.7 206.3 233.0 205.9C235.3 205.5 238.6 204.8 240.4 203.8C242.3 202.9 243.2 200.1 244.1 200.1C245.0 200.1 245.5 202.3 246.0 203.8C246.4 205.4 246.4 207.7 246.9 209.4C247.4 211.1 248.0 212.0 248.7 214.0C249.5 216.0 250.6 219.2 251.5 221.4C252.4 223.6 253.4 225.6 254.3 227.0C255.2 228.4 255.7 229.6 257.1 229.7C258.5 229.9 261.2 228.7 262.6 227.9C264.0 227.1 264.6 225.1 265.4 225.1C266.2 225.1 266.7 225.7 267.3 227.9C267.8 230.0 279.5 236.4 268.6 238.1C257.6 239.8 212.4 239.3 201.5 238.1Z" fill="#aad3df"/>
<path d="M11.7 31.9C12.1 31.4 13.4 31.1 14.0 31.3C14.6 31.5 15.4 32.4 15.4 33.0C15.4 33.6 14.5 34.7 14.0 35.0C13.4 35.2 12.4 34.9 12.0 34.4C11.7 33.9 11.4 32.4 11.7 31.9Z" fill="#f2efe9"/>
<path d="M16.2 148.8C16.7 148.5 18.5 148.1 19.8 148.2C21.1 148.3 23.2 149.0 24.0 149.4C24.8 149.8 25.2 150.4 24.6 150.6C24.0 150.9 21.7 151.1 20.4 151.0C19.1 150.9 17.5 150.4 16.8 150.0C16.1 149.7 15.7 149.1 16.2 148.8Z" fill="#f2efe9"/>
<path d="M45.6 150.0C46.1 149.6 48.2 149.1 49.2 148.8C50.3 148.5 51.6 147.9 51.9 148.1C52.2 148.3 51.7 149.4 51.0 150.0C50.4 150.6 48.8 151.6 48.0 151.8C47.2 152.1 46.6 151.8 46.2 151.5C45.8 151.2 45.1 150.5 45.6 150.0Z" fill="#f2efe9"/>
<path d="M31.0 145.0C31.2 144.7 32.0 144.5 32.2 144.7C32.3 144.9 32.1 145.9 31.9 146.2C31.8 146.4 31.3 146.4 31.1 146.2C30.9 146.0 30.8 145.2 31.0 145.0Z" fill="#f2efe9"/>
<path d="M19.2 132.0C19.2 131.6 20.2 131.5 20.6 131.8C21.0 132.1 21.6 133.4 21.6 133.8C21.6 134.2 20.8 134.7 20.4 134.4C20.0 134.1 19.2 132.4 19.2 132.0Z" fill="#f2efe9"/>
<path d="M23.4 134.4C23.6 134.1 24.4 134.0 24.6 134.2C24.8 134.4 25.0 135.3 24.8 135.6C24.7 135.9 23.9 136.0 23.6 135.8C23.4 135.6 23.2 134.7 23.4 134.4Z" fill="#f2efe9"/>
<path d="M21.0 139.8C21.2 139.5 22.5 139.3 22.8 139.5C23.1 139.6 23.3 140.6 23.0 140.9C22.8 141.2 21.7 141.3 21.4 141.1C21.0 141.0 20.8 140.1 21.0 139.8Z" fill="#f2efe9"/>
<path d="M25.8 139.2C26.0 138.9 27.1 138.8 27.4 139.0C27.7 139.2 27.7 140.1 27.5 140.4C27.3 140.7 26.3 140.9 26.1 140.7C25.8 140.5 25.6 139.5 25.8 139.2Z" fill="#f2efe9"/>
<path d="M411.7 114.0C411.0 113.0 408.5 114.6 407.3 115.1C406.1 115.6 405.2 116.0 404.6 116.8C403.9 117.5 403.5 118.5 403.5 119.5C403.4 120.5 403.6 122.1 404.0 122.8C404.4 123.5 405.2 124.1 405.7 123.9C406.1 123.7 406.3 122.3 406.8 121.7C407.2 121.2 407.6 120.7 408.4 120.6C409.2 120.5 411.2 122.3 411.7 121.2C412.3 120.1 412.4 115.0 411.7 114.0Z" fill="#f2efe9"/>
<path d="M405.1 125.0C404.7 125.6 404.2 127.1 404.0 128.3C403.8 129.5 404.2 131.0 404.0 132.2C403.8 133.3 403.5 134.4 402.9 135.5C402.4 136.6 401.5 137.7 400.7 138.8C399.9 139.8 398.9 140.8 398.0 141.5C397.0 142.2 396.0 142.4 395.2 142.8C394.4 143.3 393.6 143.7 393.0 144.3C392.4 144.8 391.8 145.3 391.4 145.9C390.9 146.5 390.9 147.6 390.3 148.1C389.6 148.6 388.5 148.5 387.5 148.7C386.5 148.8 385.5 149.0 384.2 149.2C382.9 149.4 381.1 149.4 379.8 149.8C378.5 150.1 377.5 150.9 376.5 151.4C375.5 152.0 374.7 152.4 373.8 153.1C372.8 153.7 371.7 154.5 371.0 155.3C370.3 156.0 369.4 156.8 369.4 157.5C369.3 158.1 369.8 159.0 370.5 159.1C371.1 159.2 372.4 158.5 373.2 158.0C374.0 157.5 374.6 156.8 375.4 156.4C376.2 155.9 377.1 155.6 378.2 155.3C379.2 154.9 380.4 154.4 381.5 154.2C382.6 153.9 383.7 153.6 384.8 153.6C385.8 153.6 386.9 153.7 387.5 154.2C388.1 154.6 388.1 156.1 388.6 156.4C389.1 156.6 389.7 156.4 390.3 155.8C390.8 155.2 391.3 153.1 391.9 152.5C392.5 151.9 393.3 152.1 394.1 152.0C394.9 151.8 396.0 151.4 396.9 151.4C397.7 151.4 398.3 152.1 399.1 152.0C399.8 151.8 400.5 150.5 401.3 150.3C402.0 150.1 402.8 151.0 403.5 150.9C404.1 150.7 404.6 150.0 405.1 149.2C405.6 148.4 405.9 147.1 406.2 145.9C406.5 144.7 406.5 143.4 406.8 142.1C407.0 140.7 407.5 139.0 407.9 137.7C408.2 136.3 408.8 135.2 409.0 133.8C409.1 132.4 409.1 130.7 409.0 129.4C408.8 128.1 408.3 126.8 407.9 126.1C407.4 125.4 406.7 125.2 406.2 125.0C405.7 124.8 405.5 124.5 405.1 125.0Z" fill="#f2efe9"/>
<path d="M369.4 157.5C369.7 156.8 371.3 156.3 372.1 156.4C372.9 156.4 373.8 157.2 374.3 158.0C374.8 158.8 374.9 160.2 374.9 161.3C374.8 162.4 374.2 163.9 373.8 164.6C373.3 165.3 372.6 166.0 372.1 165.7C371.6 165.4 371.4 163.9 371.0 163.0C370.6 162.0 370.2 161.1 369.9 160.2C369.6 159.3 369.0 158.1 369.4 157.5Z" fill="#f2efe9"/>
<path d="M378.7 156.4C379.2 155.6 381.0 154.9 382.0 154.7C383.0 154.5 384.5 154.8 384.8 155.3C385.0 155.7 384.3 156.9 383.7 157.5C383.0 158.0 381.7 158.3 380.9 158.6C380.1 158.8 379.3 159.5 378.9 159.1C378.6 158.7 378.2 157.1 378.7 156.4Z" fill="#f2efe9"/>
<path d="M299.3 209.0C299.8 208.2 301.4 207.2 302.7 207.0C303.9 206.8 306.3 206.9 306.8 207.7C307.4 208.4 306.7 210.6 306.0 211.5C305.3 212.4 303.7 213.1 302.7 213.2C301.6 213.2 300.4 212.7 299.8 212.0C299.3 211.3 298.9 209.8 299.3 209.0Z" fill="#f2efe9"/>
<path d="M338.2 189.8C338.9 189.0 340.7 188.0 341.5 188.2C342.3 188.3 343.2 189.3 343.2 190.7C343.2 192.1 342.1 195.0 341.5 196.5C340.9 198.0 340.4 199.8 339.8 199.8C339.3 199.8 338.6 197.6 338.2 196.5C337.8 195.4 337.3 194.3 337.3 193.2C337.3 192.1 337.5 190.7 338.2 189.8Z" fill="#f2efe9"/>
<path d="M339.0 213.2C339.8 212.3 342.1 211.8 343.2 212.3C344.3 212.9 345.5 214.8 345.7 216.5C345.8 218.2 344.1 220.5 344.0 222.3C343.9 224.1 345.1 226.2 344.8 227.3C344.6 228.4 343.2 229.3 342.3 229.0C341.5 228.7 340.7 226.8 339.8 225.7C339.0 224.6 337.6 223.7 337.3 222.3C337.1 220.9 337.9 218.9 338.2 217.3C338.4 215.8 338.2 214.0 339.0 213.2Z" fill="#f2efe9"/>
<path d="M367.0 176.5C367.1 176.2 368.2 176.2 368.3 176.5C368.4 176.8 367.9 178.2 367.7 178.2C367.4 178.2 366.9 176.8 367.0 176.5Z" fill="#f2efe9"/>
<path d="M362.7 183.2C362.8 182.8 363.9 182.8 364.0 183.2C364.1 183.5 363.6 185.2 363.3 185.2C363.1 185.2 362.6 183.5 362.7 183.2Z" fill="#f2efe9"/>
<path d="M81.2 41.7C81.3 42.1 81.8 43.3 82.0 44.2C82.2 45.0 82.3 46.2 82.3 46.7" fill="none" stroke="#aad3df" stroke-width="0.9" stroke-opacity="0.45"/>
<path d="M105.8 53.7C105.1 53.9 102.7 53.9 101.7 55.0C100.6 56.1 99.7 58.3 99.7 60.0C99.6 61.7 101.1 64.4 101.3 65.3" fill="none" stroke="#aad3df" stroke-width="1.0" stroke-opacity="0.45"/>
<path d="M90.8 75.8C90.7 76.5 90.3 78.8 90.0 80.0C89.7 81.2 89.3 82.5 89.2 83.0" fill="none" stroke="#aad3df" stroke-width="0.6" stroke-opacity="0.45"/>
<path d="M126.3 30.0C125.9 30.6 124.7 31.5 123.8 33.3C123.0 35.1 122.3 38.9 121.3 40.8C120.4 42.8 119.4 43.3 118.0 45.0C116.6 46.7 113.8 49.9 113.0 50.8" fill="none" stroke="#aad3df" stroke-width="0.5" stroke-opacity="0.45"/>
<path d="M269.3 34.2C270.0 33.9 271.8 32.9 273.5 32.5C275.2 32.1 278.4 31.8 279.3 31.7" fill="none" stroke="#aad3df" stroke-width="0.4" stroke-opacity="0.45"/>
<path d="M279.3 39.2C279.1 40.0 277.5 43.2 277.7 44.2C277.8 45.1 279.8 44.9 280.2 45.0" fill="none" stroke="#aad3df" stroke-width="0.4" stroke-opacity="0.45"/>
<path d="M276.0 50.0C276.6 49.9 278.5 48.3 279.3 49.2C280.2 50.0 280.9 52.6 281.0 55.0C281.1 57.4 280.3 61.9 280.2 63.3" fill="none" stroke="#aad3df" stroke-width="0.4" stroke-opacity="0.45"/>
<path d="M304.3 2.5C305.0 2.9 308.1 3.8 308.5 5.0C308.9 6.2 307.1 9.2 306.8 10.0" fill="none" stroke="#aad3df" stroke-width="0.5" stroke-opacity="0.45"/>
<path d="M369.0 0.0C369.1 1.4 370.7 5.6 369.8 8.3C369.0 11.1 367.5 14.4 364.0 16.7C360.5 18.9 354.6 20.0 349.0 21.7C343.4 23.3 333.7 25.8 330.7 26.7" fill="none" stroke="#aad3df" stroke-width="0.5" stroke-opacity="0.45"/>
<path d="M38.7 -0.8C39.3 0.1 42.0 3.2 42.5 5.0C43.0 6.8 42.8 7.8 41.7 10.0C40.6 12.2 37.4 16.1 35.8 18.3C34.3 20.6 33.1 22.5 32.5 23.3" fill="none" stroke="#c9a9cc" stroke-width="0.55"/>
<path d="M30.8 27.5 L30.0 31.7" fill="none" stroke="#c9a9cc" stroke-width="0.55"/>
<path d="M30.8 38.7C30.6 38.9 30.1 39.6 29.2 40.0C28.2 40.4 26.5 41.1 25.0 40.8C23.5 40.6 20.8 39.0 20.0 38.7" fill="none" stroke="#c9a9cc" stroke-width="0.55"/>
<path d="M29.7 40.0C29.9 40.8 31.1 43.5 31.3 45.0C31.5 46.5 30.9 48.5 30.8 49.2" fill="none" stroke="#c9a9cc" stroke-width="0.55"/>
<path d="M8.3 48.3C9.4 48.2 12.8 47.4 15.0 47.5C17.2 47.6 19.7 48.5 21.7 49.2C23.6 49.9 25.1 51.7 26.7 51.7C28.2 51.7 30.1 49.6 30.8 49.2" fill="none" stroke="#c9a9cc" stroke-width="0.55"/>
<path d="M26.7 51.7C26.4 52.5 25.8 55.1 25.0 56.7C24.2 58.2 23.2 60.0 21.7 60.8C20.1 61.7 17.1 62.1 15.8 61.7C14.6 61.2 14.7 59.3 14.2 58.3C13.6 57.4 13.6 56.4 12.5 55.8C11.4 55.3 8.3 55.1 7.5 55.0" fill="none" stroke="#c9a9cc" stroke-width="0.55"/>
<path d="M30.8 49.2C32.1 49.6 36.5 50.4 38.3 51.7C40.1 52.9 41.2 55.1 41.7 56.7C42.1 58.2 40.3 59.4 40.8 60.8C41.4 62.2 44.7 63.2 45.0 65.0C45.3 66.8 42.9 70.6 42.5 71.7" fill="none" stroke="#c9a9cc" stroke-width="0.55"/>
<path d="M15.0 73.3C16.7 73.6 21.9 74.6 25.0 75.0C28.1 75.4 30.4 76.4 33.3 75.8C36.2 75.3 41.0 72.4 42.5 71.7" fill="none" stroke="#c9a9cc" stroke-width="0.55"/>
<path d="M15.8 61.7C16.0 62.5 16.8 64.7 16.7 66.7C16.5 68.6 15.0 70.6 15.0 73.3C15.0 76.1 16.4 81.7 16.7 83.3" fill="none" stroke="#c9a9cc" stroke-width="0.55"/>
<path d="M42.5 71.7C43.8 71.5 48.2 70.0 50.0 70.8C51.8 71.7 51.9 74.9 53.3 76.7C54.7 78.5 56.7 80.6 58.3 81.7C60.0 82.8 62.5 83.1 63.3 83.3" fill="none" stroke="#c9a9cc" stroke-width="0.55"/>
<path d="M92.9 93.8C93.1 92.5 93.2 88.5 94.0 86.0C94.8 83.5 96.2 80.8 97.9 79.0C99.6 77.2 101.5 76.3 104.0 75.5C106.5 74.7 110.0 74.2 112.7 74.1C115.4 74.0 117.5 74.8 120.0 74.8C122.5 74.8 124.6 74.6 127.5 74.1C130.4 73.6 135.3 72.9 137.4 71.6C139.5 70.2 139.4 67.7 140.0 66.0C140.6 64.3 139.8 62.7 141.1 61.7C142.4 60.7 145.3 60.4 148.0 60.0C150.7 59.6 155.6 59.4 157.1 59.3" fill="none" stroke="#c9a9cc" stroke-width="0.55"/>
<path d="M263.5 83.3C263.8 81.7 263.9 74.9 265.2 73.3C266.4 71.8 268.9 73.6 271.0 74.2C273.1 74.7 275.2 75.7 277.7 76.7C280.2 77.6 282.4 79.2 286.0 80.0C289.6 80.8 295.4 81.5 299.3 81.7C303.2 81.8 305.2 80.8 309.3 80.8C313.5 80.8 321.8 81.5 324.3 81.7" fill="none" stroke="#c9a9cc" stroke-width="0.55"/>
<path d="M334.0 83.3C334.6 81.1 335.9 73.1 337.3 70.0C338.7 66.9 340.1 65.8 342.3 65.0C344.6 64.2 348.3 64.2 350.7 65.0C353.0 65.8 355.0 66.9 356.5 70.0C358.0 73.1 359.3 81.1 359.8 83.3" fill="none" stroke="#c9a9cc" stroke-width="0.55"/>
<path d="M138.0 104.9C135.6 105.2 126.1 103.8 123.7 107.0C121.3 110.1 124.3 120.8 123.7 123.7C123.1 126.7 120.6 124.6 120.0 124.7" fill="none" stroke="#c9a9cc" stroke-width="0.55"/>
<path d="M123.7 123.7C124.3 123.6 126.3 122.9 127.4 123.1C128.6 123.3 129.1 124.8 130.5 125.0C132.0 125.2 135.2 124.5 136.1 124.4" fill="none" stroke="#c9a9cc" stroke-width="0.55"/>
<path d="M92.7 89.6C93.0 90.2 93.7 92.3 94.5 93.3C95.4 94.4 96.7 94.9 97.6 95.8C98.6 96.7 99.8 97.7 100.1 98.7C100.4 99.6 99.6 101.0 99.5 101.4" fill="none" stroke="#c9a9cc" stroke-width="0.55"/>
<path d="M48.0 146.5C49.7 146.2 54.7 145.5 58.0 144.8C61.3 144.1 64.7 143.0 68.0 142.3C71.3 141.6 74.8 140.8 78.0 140.7C81.2 140.5 84.7 142.3 87.2 141.5C89.7 140.7 92.0 136.6 93.0 135.7" fill="none" stroke="#c9a9cc" stroke-width="0.55"/>
<path d="M93.0 135.7C92.6 134.8 91.5 132.1 90.5 130.7C89.5 129.3 88.3 128.4 87.2 127.3C86.1 126.2 84.4 124.6 83.8 124.0" fill="none" stroke="#c9a9cc" stroke-width="0.55"/>
<path d="M93.0 135.7C93.4 136.8 95.4 140.1 95.5 142.3C95.6 144.6 93.4 146.5 93.8 149.0C94.3 151.5 96.5 154.8 98.0 157.3C99.5 159.8 101.8 161.9 103.0 164.0C104.2 166.1 105.1 168.9 105.5 169.8" fill="none" stroke="#c9a9cc" stroke-width="0.55"/>
<path d="M78.0 140.7C77.6 141.8 77.2 145.1 75.5 147.3C73.8 149.6 69.2 152.9 68.0 154.0" fill="none" stroke="#c9a9cc" stroke-width="0.55"/>
<path d="M68.0 154.0C69.4 155.1 73.3 158.4 76.3 160.7C79.4 162.9 83.3 165.9 86.3 167.3C89.4 168.7 93.3 168.7 94.7 169.0" fill="none" stroke="#c9a9cc" stroke-width="0.55"/>
<path d="M58.0 157.3 L68.0 154.0" fill="none" stroke="#c9a9cc" stroke-width="0.55"/>
<path d="M58.0 157.3C58.7 158.4 62.2 161.8 62.2 164.0C62.2 166.2 58.7 169.6 58.0 170.7" fill="none" stroke="#c9a9cc" stroke-width="0.55"/>
<path d="M113.8 141.5C115.1 141.4 119.0 140.5 121.3 140.7C123.7 140.8 125.8 142.6 128.0 142.3C130.2 142.1 132.4 138.2 134.7 139.0C136.9 139.8 140.2 145.9 141.3 147.3" fill="none" stroke="#c9a9cc" stroke-width="0.55"/>
<path d="M141.3 147.3C141.6 149.0 143.1 154.3 143.0 157.3C142.9 160.4 139.9 162.9 140.5 165.7C141.1 168.4 145.4 172.6 146.3 174.0" fill="none" stroke="#c9a9cc" stroke-width="0.55"/>
<path d="M123.8 109.0C123.9 111.2 123.1 119.3 124.3 122.3C125.6 125.4 128.5 125.4 131.3 127.3C134.2 129.3 138.6 132.3 141.3 134.0C144.1 135.7 146.9 136.8 148.0 137.3" fill="none" stroke="#c9a9cc" stroke-width="0.55"/>
<path d="M141.3 147.3C142.4 146.8 145.5 145.1 148.0 144.0C150.5 142.9 154.9 141.2 156.3 140.7" fill="none" stroke="#c9a9cc" stroke-width="0.55"/>
<path d="M71.2 113.8C72.1 114.1 74.5 115.1 76.2 115.7C78.0 116.3 80.1 116.7 81.8 117.3C83.4 118.0 84.7 119.0 86.2 119.6C87.7 120.1 89.0 120.1 90.7 120.7C92.3 121.3 94.3 122.3 96.0 123.1C97.7 123.9 99.9 125.0 100.7 125.3" fill="none" stroke="#c9a9cc" stroke-width="0.55"/>
<path d="M76.2 122.3C76.8 122.4 78.3 122.4 79.6 122.9C80.9 123.4 82.9 124.2 84.0 125.1C85.1 126.0 85.1 127.7 86.2 128.4C87.3 129.2 89.2 129.0 90.7 129.6C92.1 130.1 94.4 131.4 95.1 131.8" fill="none" stroke="#c9a9cc" stroke-width="0.55"/>
<path d="M86.2 119.6C86.8 120.1 88.3 122.1 89.6 122.9C90.9 123.6 92.7 123.2 94.0 124.0C95.3 124.8 96.8 127.2 97.3 127.9" fill="none" stroke="#c9a9cc" stroke-width="0.55"/>
<path d="M18.4 90.8C17.5 91.3 14.1 93.1 12.8 94.0C11.5 94.9 11.0 95.2 10.4 96.4C9.8 97.6 10.4 100.3 9.2 101.2C8.0 102.1 4.7 101.8 3.2 102.0C1.7 102.2 0.5 102.3 0.0 102.4" fill="none" stroke="#c9a9cc" stroke-width="0.55"/>
<path d="M5.6 111.2C6.8 111.4 10.7 111.9 12.8 112.2C14.9 112.6 16.5 113.3 18.4 113.2C20.3 113.1 22.5 111.9 24.0 111.8C25.5 111.7 27.0 112.4 27.6 112.6" fill="none" stroke="#c9a9cc" stroke-width="0.55"/>
<path d="M27.2 92.4C27.6 93.2 29.1 95.6 29.6 97.2C30.1 98.8 30.3 100.4 30.0 102.0C29.7 103.6 28.3 106.0 28.0 106.8" fill="none" stroke="#c9a9cc" stroke-width="0.55"/>
<path d="M18.4 90.8C19.3 90.9 22.5 91.3 24.0 91.6C25.5 91.9 26.7 92.3 27.2 92.4" fill="none" stroke="#c9a9cc" stroke-width="0.55"/>
<path d="M5.6 111.2C5.3 111.8 3.9 113.3 4.0 114.8C4.1 116.3 4.9 119.2 6.0 120.4C7.1 121.6 8.5 122.0 10.4 122.0C12.3 122.0 15.3 120.5 17.6 120.4C19.9 120.3 22.9 121.1 24.0 121.2" fill="none" stroke="#c9a9cc" stroke-width="0.55"/>
<path d="M6.0 120.4C5.7 121.2 3.8 124.0 4.0 125.2C4.2 126.4 6.7 127.2 7.2 127.6" fill="none" stroke="#c9a9cc" stroke-width="0.55"/>
<path d="M24.0 121.2C24.3 120.7 25.0 119.4 25.6 118.0C26.2 116.6 27.3 113.5 27.6 112.6" fill="none" stroke="#c9a9cc" stroke-width="0.55"/>
<path d="M241.0 104.7C243.2 105.6 251.6 108.4 254.3 110.5C257.1 112.6 254.9 115.8 257.7 117.2C260.4 118.6 266.1 117.9 271.0 118.8C275.9 119.8 282.7 123.0 286.8 123.0C291.0 123.0 292.5 119.9 296.0 118.8C299.5 117.7 304.9 118.1 307.7 116.3C310.4 114.5 309.9 110.2 312.7 108.0C315.4 105.8 322.4 103.8 324.3 103.0" fill="none" stroke="#c9a9cc" stroke-width="0.55"/>
<path d="M360.8 78.2C361.1 79.2 361.3 83.1 362.5 84.5C363.8 85.9 366.9 85.7 368.4 86.6C369.9 87.5 370.9 88.7 371.8 89.9C372.6 91.2 372.3 93.5 373.4 94.1C374.6 94.8 376.8 94.1 378.5 93.7C380.2 93.3 382.1 92.0 383.5 91.6C384.9 91.2 386.6 90.5 386.9 91.2C387.2 91.9 385.9 94.2 385.2 95.8C384.5 97.4 383.4 99.3 382.7 100.8C382.0 102.4 382.3 104.1 381.0 105.1C379.7 106.0 376.3 105.5 375.1 106.7C373.9 108.0 373.9 110.9 373.9 112.6C373.8 114.3 375.2 115.8 374.7 116.8C374.2 117.8 372.1 117.9 370.9 118.5C369.7 119.1 368.7 119.8 367.6 120.2C366.4 120.6 364.8 120.7 364.2 120.8" fill="none" stroke="#c9a9cc" stroke-width="0.55"/>
<path d="M371.6 120.0C370.9 120.4 368.8 121.6 367.4 122.1C366.0 122.6 364.6 122.3 363.2 122.8C361.8 123.3 359.9 124.2 359.0 124.9C358.1 125.6 358.4 126.3 357.6 127.0C356.8 127.7 355.2 128.4 354.1 129.1C353.1 129.8 351.8 130.9 351.3 131.2" fill="none" stroke="#c9a9cc" stroke-width="0.55"/>
<path d="M358.3 138.2C358.9 138.0 360.8 137.1 361.8 136.8C362.9 136.5 364.1 136.6 364.6 136.5" fill="none" stroke="#c9a9cc" stroke-width="0.55"/>
<path d="M20.8 165.7C21.0 171.2 21.5 192.1 21.7 199.0C21.8 205.9 22.4 205.9 21.7 207.3C21.0 208.7 18.3 203.0 17.5 207.3C16.7 211.6 16.8 228.9 16.7 233.2" fill="none" stroke="#c9a9cc" stroke-width="0.55"/>
<path d="M21.7 199.0 L60.0 199.8" fill="none" stroke="#c9a9cc" stroke-width="0.55"/>
<path d="M141.3 158.2C141.8 159.4 142.9 163.9 143.8 165.7C144.8 167.5 147.4 167.3 147.2 169.0C146.9 170.7 142.7 173.4 142.2 175.7C141.6 177.9 144.0 180.2 143.8 182.3C143.7 184.5 141.8 187.6 141.3 188.7" fill="none" stroke="#c9a9cc" stroke-width="0.55"/>
<path d="M147.2 169.0C148.4 169.4 152.0 171.8 154.7 171.5C157.3 171.2 160.2 168.6 163.0 167.3C165.8 166.1 169.4 165.2 171.3 164.0C173.3 162.8 174.1 160.5 174.7 159.8" fill="none" stroke="#c9a9cc" stroke-width="0.55"/>
<path d="M172.2 196.5C171.6 195.9 168.8 194.7 168.8 193.2C168.8 191.6 171.9 189.0 172.2 187.3C172.4 185.7 170.1 184.6 170.5 183.2C170.9 181.8 173.1 180.2 174.7 179.0C176.2 177.8 178.4 177.3 179.7 175.7C180.9 174.0 181.8 170.1 182.2 169.0" fill="none" stroke="#c9a9cc" stroke-width="0.55"/>
<path d="M201.3 169.0C202.4 169.3 205.5 169.9 208.0 171.0C210.5 172.1 214.9 174.9 216.3 175.7" fill="none" stroke="#c9a9cc" stroke-width="0.55"/>
<path d="M107.2 209.8C108.1 210.5 111.6 212.6 113.0 214.0C114.4 215.4 115.1 217.5 115.5 218.2" fill="none" stroke="#c9a9cc" stroke-width="0.55"/>
<path d="M122.2 201.5C122.6 202.8 125.3 206.6 124.7 209.0C124.0 211.4 119.4 214.6 118.3 215.7" fill="none" stroke="#c9a9cc" stroke-width="0.55"/>
<path d="M200.6 168.6C201.7 169.4 204.8 171.9 207.1 173.3C209.4 174.6 210.9 175.6 214.5 177.0C218.0 178.4 225.4 181.1 228.4 181.6C231.3 182.1 231.5 180.0 232.1 179.7" fill="none" stroke="#c9a9cc" stroke-width="0.55"/>
<path d="M233.0 184.4C233.9 184.1 237.0 182.2 238.6 182.5C240.1 182.8 242.0 184.7 242.3 186.2C242.6 187.8 240.3 189.6 240.4 191.8C240.6 193.9 242.7 198.0 243.2 199.2" fill="none" stroke="#c9a9cc" stroke-width="0.55"/>
<path d="M233.0 184.4C232.8 185.9 232.1 191.0 232.1 193.6C232.1 196.3 232.8 199.0 233.0 200.1" fill="none" stroke="#c9a9cc" stroke-width="0.55"/>
<path d="M242.3 186.2C243.2 185.3 245.8 182.8 247.8 180.7C249.8 178.5 252.1 174.8 254.3 173.3C256.5 171.7 259.7 171.7 260.8 171.4" fill="none" stroke="#c9a9cc" stroke-width="0.55"/>
<path d="M260.8 171.4C261.4 173.0 264.2 177.9 264.5 180.7C264.8 183.4 262.0 185.9 262.6 188.1C263.2 190.2 267.3 192.7 268.2 193.6" fill="none" stroke="#c9a9cc" stroke-width="0.55"/>
<path d="M268.2 193.6C267.7 194.9 265.1 198.3 265.4 201.0C265.7 203.8 269.9 207.2 270.0 210.3C270.2 213.4 266.2 216.8 266.3 219.6C266.5 222.3 270.2 225.7 271.0 227.0" fill="none" stroke="#c9a9cc" stroke-width="0.55"/>
<path d="M268.2 193.6C269.4 194.2 273.4 197.0 275.6 197.3C277.8 197.6 280.2 195.8 281.1 195.5" fill="none" stroke="#c9a9cc" stroke-width="0.55"/>
<path d="M275.6 197.3C275.3 198.9 272.8 204.1 273.7 206.6C274.7 209.1 279.0 210.3 281.1 212.1C283.3 214.0 285.8 216.8 286.7 217.7" fill="none" stroke="#c9a9cc" stroke-width="0.55"/>
<path d="M281.1 195.5C282.1 194.9 284.5 192.1 286.7 191.8C288.9 191.5 292.3 192.7 294.1 193.6C296.0 194.6 297.2 196.7 297.8 197.3" fill="none" stroke="#c9a9cc" stroke-width="0.55"/>
<g font-family="'Liberation Sans','DejaVu Sans','Noto Sans CJK SC',sans-serif" text-anchor="middle" fill="#7e6392" stroke="#f2efe9" stroke-opacity="0.7" stroke-width="0.8" paint-order="stroke">
<text x="30.2" y="66.0" font-size="6.6px">Беларусь</text>
<text x="50.8" y="93.4" font-size="6.7px">Україна</text>
<text x="18.6" y="106.1" font-size="6.9px">România</text>
<text x="55.8" y="136.0" font-size="6.7px">Türkiye</text>
<text x="15.2" y="139.8" font-size="6.7px">Ελλάς</text>
<text x="159.0" y="93.0" font-size="6.3px">Қазақстан</text>
<text x="148.0" y="125.3" font-size="6px">Oʻzbekiston</text>
<text x="132.8" y="136.2" font-size="6.8px">Türkmenistan</text>
<text x="152.0" y="157.5" font-size="6.5px">افغانستان</text>
<text x="81.4" y="158.6" font-size="5.6px">جمهورية العراق</text>
<text x="81.4" y="163.8" font-size="5.6px">کۆماری عێراق</text>
<text x="117.0" y="162.3" font-size="6px">ایران</text>
<text x="169.0" y="171.0" font-size="6px">پاکستان</text>
<text x="200.5" y="200.6" font-size="6px">India</text>
<text x="127.7" y="206.0" font-size="6px">عمان</text>
<text x="36.7" y="184.0" font-size="6px">مصر</text>
<text x="83.0" y="192.6" font-size="6.8px">السعودية</text>
<text x="95.0" y="224.6" font-size="6.8px">اليمن</text>
<text x="35.5" y="224.6" font-size="7px">السودان</text>
<text x="8.3" y="224.6" font-size="7px">تشاد</text>
<text x="264.7" y="141.7" font-size="6px">中国</text>
<text x="285.0" y="91.0" font-size="6px">Монгол</text>
<text x="277.0" y="100.5" font-size="6px">улс</text>
<text x="288.0" y="108.5" font-size="5px">ᠮᠣᠩᠭᠣᠯ</text>
<text x="298.5" y="223.8" font-size="6.7px">Việt Nam</text>
<text x="272.7" y="232.8" font-size="6px">ประเทศไทย</text>
<text x="345.0" y="232.6" font-size="6.9px">Philippines</text>
<text x="255.0" y="212.8" font-size="7px">မြန်မာ</text>
</g>
</g>
<g font-family="'Liberation Sans',Arial,sans-serif" font-weight="bold" font-size="6.9px" text-anchor="middle">
<circle cx="-1.8" cy="112.1" r="8.75" fill="#ff7e00" fill-opacity="0.8" filter="url(#bl2)"/>
<circle cx="8.4" cy="118.4" r="8.75" fill="#ffff00" fill-opacity="0.8" filter="url(#bl2)"/>
<circle cx="293.3" cy="93.5" r="8.75" fill="#00e400" fill-opacity="0.8" filter="url(#bl2)"/>
<circle cx="193.7" cy="115.5" r="8.75" fill="#00e400" fill-opacity="0.8" filter="url(#bl2)"/>
<circle cx="184.2" cy="117.0" r="8.75" fill="#00e400" fill-opacity="0.8" filter="url(#bl2)"/>
<circle cx="348.5" cy="122.1" r="8.75" fill="#8c8c8c" fill-opacity="0.85" filter="url(#bl2)"/>
<circle cx="168.0" cy="123.6" r="8.75" fill="#ffff00" fill-opacity="0.8" filter="url(#bl2)"/>
<circle cx="325.4" cy="129.8" r="8.75" fill="#ff0000" fill-opacity="0.8" filter="url(#bl2)"/>
<circle cx="166.7" cy="136.0" r="8.75" fill="#ffff00" fill-opacity="0.8" filter="url(#bl2)"/>
<circle cx="131.8" cy="138.5" r="8.75" fill="#00e400" fill-opacity="0.8" filter="url(#bl2)"/>
<circle cx="167.5" cy="153.0" r="8.75" fill="#ff7e00" fill-opacity="0.8" filter="url(#bl2)"/>
<circle cx="175.4" cy="154.6" r="8.75" fill="#ffff00" fill-opacity="0.8" filter="url(#bl2)"/>
<circle cx="180.8" cy="155.0" r="8.75" fill="#00e400" fill-opacity="0.8" filter="url(#bl2)"/>
<circle cx="85.2" cy="157.3" r="8.75" fill="#00e400" fill-opacity="0.8" filter="url(#bl2)"/>
<circle cx="57.5" cy="161.8" r="8.75" fill="#8c8c8c" fill-opacity="0.85" filter="url(#bl2)"/>
<circle cx="184.7" cy="163.8" r="8.75" fill="#8c8c8c" fill-opacity="0.85" filter="url(#bl2)"/>
<circle cx="341.5" cy="165.8" r="8.75" fill="#ff0000" fill-opacity="0.8" filter="url(#bl2)"/>
<circle cx="97.5" cy="172.7" r="8.75" fill="#ffff00" fill-opacity="0.8" filter="url(#bl2)"/>
<circle cx="194.3" cy="174.9" r="8.75" fill="#ff0000" fill-opacity="0.8" filter="url(#bl2)"/>
<circle cx="221.8" cy="178.7" r="8.75" fill="#ff0000" fill-opacity="0.8" filter="url(#bl2)"/>
<circle cx="92.8" cy="189.8" r="8.75" fill="#8c8c8c" fill-opacity="0.85" filter="url(#bl2)"/>
<circle cx="105.0" cy="184.0" r="8.75" fill="#ffff00" fill-opacity="0.8" filter="url(#bl2)"/>
<circle cx="118.3" cy="191.5" r="8.75" fill="#00e400" fill-opacity="0.8" filter="url(#bl2)"/>
<circle cx="121.3" cy="187.7" r="8.75" fill="#ffff00" fill-opacity="0.8" filter="url(#bl2)"/>
<circle cx="160.8" cy="189.2" r="8.75" fill="#ff0000" fill-opacity="0.8" filter="url(#bl2)"/>
<circle cx="238.5" cy="192.8" r="8.75" fill="#ff0000" fill-opacity="0.8" filter="url(#bl2)"/>
<circle cx="231.3" cy="197.3" r="8.75" fill="#ff0000" fill-opacity="0.8" filter="url(#bl2)"/>
<circle cx="314.3" cy="195.7" r="8.75" fill="#ffff00" fill-opacity="0.8" filter="url(#bl2)"/>
<circle cx="67.8" cy="201.5" r="8.75" fill="#ffff00" fill-opacity="0.8" filter="url(#bl2)"/>
<circle cx="289.3" cy="202.7" r="8.75" fill="#ff0000" fill-opacity="0.8" filter="url(#bl2)"/>
<circle cx="180.2" cy="210.3" r="8.75" fill="#ffff00" fill-opacity="0.8" filter="url(#bl2)"/>
<circle cx="279.0" cy="214.0" r="8.75" fill="#ff7e00" fill-opacity="0.8" filter="url(#bl2)"/>
<circle cx="198.8" cy="215.7" r="8.75" fill="#ff0000" fill-opacity="0.8" filter="url(#bl2)"/>
<circle cx="257.7" cy="217.7" r="8.75" fill="#ff0000" fill-opacity="0.8" filter="url(#bl2)"/>
<circle cx="45.8" cy="222.0" r="8.75" fill="#ff0000" fill-opacity="0.8" filter="url(#bl2)"/>
<circle cx="204.7" cy="229.8" r="8.75" fill="#ffff00" fill-opacity="0.8" filter="url(#bl2)"/>
<circle cx="292.2" cy="239.2" r="8.75" fill="#ffff00" fill-opacity="0.8" filter="url(#bl2)"/>
<text x="-1.8" y="114.4" fill="#111" stroke="#fff" stroke-width="2" stroke-linejoin="round" paint-order="stroke">104</text>
<text x="8.4" y="120.7" fill="#111" stroke="#fff" stroke-width="2" stroke-linejoin="round" paint-order="stroke">57</text>
<text x="293.3" y="95.8" fill="#111" stroke="#fff" stroke-width="2" stroke-linejoin="round" paint-order="stroke">28</text>
<text x="193.7" y="117.8" fill="#111" stroke="#fff" stroke-width="2" stroke-linejoin="round" paint-order="stroke">29</text>
<text x="184.2" y="119.3" fill="#111" stroke="#fff" stroke-width="2" stroke-linejoin="round" paint-order="stroke">31</text>
<text x="348.5" y="124.4" fill="#111" stroke="#fff" stroke-width="2" stroke-linejoin="round" paint-order="stroke">N/A</text>
<text x="168.0" y="125.9" fill="#111" stroke="#fff" stroke-width="2" stroke-linejoin="round" paint-order="stroke">70</text>
<text x="325.4" y="132.1" fill="#111" stroke="#fff" stroke-width="2" stroke-linejoin="round" paint-order="stroke">162</text>
<text x="166.7" y="138.3" fill="#111" stroke="#fff" stroke-width="2" stroke-linejoin="round" paint-order="stroke">59</text>
<text x="131.8" y="140.8" fill="#111" stroke="#fff" stroke-width="2" stroke-linejoin="round" paint-order="stroke">35</text>
<text x="167.5" y="155.3" fill="#111" stroke="#fff" stroke-width="2" stroke-linejoin="round" paint-order="stroke">122</text>
<text x="175.4" y="156.9" fill="#111" stroke="#fff" stroke-width="2" stroke-linejoin="round" paint-order="stroke">65</text>
<text x="180.8" y="157.3" fill="#111" stroke="#fff" stroke-width="2" stroke-linejoin="round" paint-order="stroke">36</text>
<text x="85.2" y="159.6" fill="#111" stroke="#fff" stroke-width="2" stroke-linejoin="round" paint-order="stroke">47</text>
<text x="57.5" y="164.1" fill="#111" stroke="#fff" stroke-width="2" stroke-linejoin="round" paint-order="stroke">N/A</text>
<text x="184.7" y="166.1" fill="#111" stroke="#fff" stroke-width="2" stroke-linejoin="round" paint-order="stroke">N/A</text>
<text x="341.5" y="168.1" fill="#111" stroke="#fff" stroke-width="2" stroke-linejoin="round" paint-order="stroke">163</text>
<text x="97.5" y="175.0" fill="#111" stroke="#fff" stroke-width="2" stroke-linejoin="round" paint-order="stroke">62</text>
<text x="194.3" y="177.2" fill="#111" stroke="#fff" stroke-width="2" stroke-linejoin="round" paint-order="stroke">170</text>
<text x="221.8" y="181.0" fill="#111" stroke="#fff" stroke-width="2" stroke-linejoin="round" paint-order="stroke">183</text>
<text x="92.8" y="192.1" fill="#111" stroke="#fff" stroke-width="2" stroke-linejoin="round" paint-order="stroke">N/A</text>
<text x="105.0" y="186.3" fill="#111" stroke="#fff" stroke-width="2" stroke-linejoin="round" paint-order="stroke">90</text>
<text x="118.3" y="193.8" fill="#111" stroke="#fff" stroke-width="2" stroke-linejoin="round" paint-order="stroke">47</text>
<text x="121.3" y="190.0" fill="#111" stroke="#fff" stroke-width="2" stroke-linejoin="round" paint-order="stroke">84</text>
<text x="160.8" y="191.5" fill="#111" stroke="#fff" stroke-width="2" stroke-linejoin="round" paint-order="stroke">193</text>
<text x="238.5" y="195.1" fill="#111" stroke="#fff" stroke-width="2" stroke-linejoin="round" paint-order="stroke">167</text>
<text x="231.3" y="199.6" fill="#111" stroke="#fff" stroke-width="2" stroke-linejoin="round" paint-order="stroke">159</text>
<text x="314.3" y="198.0" fill="#111" stroke="#fff" stroke-width="2" stroke-linejoin="round" paint-order="stroke">62</text>
<text x="67.8" y="203.8" fill="#111" stroke="#fff" stroke-width="2" stroke-linejoin="round" paint-order="stroke">96</text>
<text x="289.3" y="205.0" fill="#111" stroke="#fff" stroke-width="2" stroke-linejoin="round" paint-order="stroke">155</text>
<text x="180.2" y="212.6" fill="#111" stroke="#fff" stroke-width="2" stroke-linejoin="round" paint-order="stroke">60</text>
<text x="279.0" y="216.3" fill="#111" stroke="#fff" stroke-width="2" stroke-linejoin="round" paint-order="stroke">112</text>
<text x="198.8" y="218.0" fill="#111" stroke="#fff" stroke-width="2" stroke-linejoin="round" paint-order="stroke">157</text>
<text x="257.7" y="220.0" fill="#111" stroke="#fff" stroke-width="2" stroke-linejoin="round" paint-order="stroke">156</text>
<text x="45.8" y="224.3" fill="#111" stroke="#fff" stroke-width="2" stroke-linejoin="round" paint-order="stroke">168</text>
<text x="204.7" y="232.1" fill="#111" stroke="#fff" stroke-width="2" stroke-linejoin="round" paint-order="stroke">83</text>
<text x="292.2" y="241.5" fill="#111" stroke="#fff" stroke-width="2" stroke-linejoin="round" paint-order="stroke">55</text>
</g>
</svg>
<div class="abs" id="popup" style="left:156.7px;top:25px;width:93.3px;height:78px;background:#fff;border-radius:6px;box-shadow:0 1.5px 6px rgba(0,0,0,0.3);">
<div class="abs" style="left:-5px;width:103.3px;top:10.2px;text-align:center;font-size:8.15px;line-height:8.75px;color:#333;white-space:nowrap">Bishkek<br>2021-03-30 7:00 PM<br>(LT)</div>
<div class="abs" style="left:8.8px;top:35px;width:76.3px;height:34.4px;box-sizing:border-box;border:0.6px solid #024a83;background:#fff;overflow:hidden">
<div class="abs" style="left:0;top:0;width:100%;height:16.2px;background:#024a83;"></div>
<div class="abs" style="left:0;top:0;width:46.9px;line-height:16.4px;text-align:center;color:#fff;font-weight:bold;font-size:8.1px">Pollutant</div>
<div class="abs" style="left:46.9px;top:0;width:28.4px;line-height:16.4px;text-align:center;color:#fff;font-weight:bold;font-size:8.1px">AQI</div>
<div class="abs" style="left:46.6px;top:16.2px;width:30px;height:18px;background:#00e400;border-left:0.5px solid #024a83"></div>
<div class="abs" style="left:0;top:16.2px;width:46.9px;line-height:17.6px;text-align:center;color:#333;font-size:8.1px">PM2.5</div>
<div class="abs" style="left:46.9px;top:16.2px;width:28.4px;line-height:17.6px;text-align:center;color:#222;font-size:8.1px">31</div>
</div>
<svg class="abs" style="left:21.3px;top:77.8px" width="14" height="7" viewBox="0 0 14 7"><path d="M0.5 0L7 5.8L13.5 0z" fill="#fff"/></svg>
</div>
</div>

<div class="abs bar" style="left:440.6px;top:6.8px;width:194.4px;height:20.2px;line-height:20.6px"><span>Select a City</span></div>
<div class="abs dd" style="left:440.2px;top:28.2px;width:195.4px;height:21.8px;line-height:19.6px"><span>Bishkek</span>
<svg class="abs" style="left:171.1px;top:4.4px" width="20" height="10" viewBox="0 0 20 10"><path d="M1.3 1.5l3.3 3.7M4.6 1.5l-3.3 3.7" stroke="#888" stroke-width="0.75" fill="none"/><path d="M11.5 3.1h4.2l-2.1 2.3z" fill="#777"/></svg></div>
<div class="abs bar" style="left:440.6px;top:62px;width:194.4px;height:20px;line-height:22px"><span>Select a Parameter</span></div>
<div class="abs dd" style="left:440.2px;top:83px;width:195.4px;height:21.7px;line-height:19.8px"><span>PM2.5</span>
<svg class="abs" style="left:171.1px;top:4.4px" width="20" height="10" viewBox="0 0 20 10"><path d="M1.3 1.5l3.3 3.7M4.6 1.5l-3.3 3.7" stroke="#888" stroke-width="0.75" fill="none"/><path d="M11.5 3.1h4.2l-2.1 2.3z" fill="#777"/></svg></div>
<div class="abs" id="citybox" style="left:440px;top:116px;width:196px;height:43px;background:#fff;border:1px solid #c9c9c9;box-sizing:border-box;">
<div class="abs" style="left:5.3px;top:6.2px;font-size:8px;font-weight:bold;color:#333;line-height:10px">Bishkek</div>
<svg class="abs" style="left:167.9px;top:14.9px" width="20" height="20" viewBox="0 0 20 20"><rect width="20" height="20" fill="#f2b134"/><circle cx="5" cy="15.2" r="2.1" fill="#fff"/><path d="M3 9.6a7.4 7.4 0 0 1 7.4 7.4" stroke="#fff" stroke-width="2.6" fill="none"/><path d="M3 4.4a12.6 12.6 0 0 1 12.6 12.6" stroke="#fff" stroke-width="2.6" fill="none"/></svg>
</div>
<div class="abs" id="note" style="left:439.3px;top:166px;width:200px;font-size:6.4px;line-height:11.4px;color:#5a5a5a;white-space:nowrap">Note: Values above 500 are considered Beyond the AQI. Follow<br>recommendations for the Hazardous category. Additional information<br>on reducing exposure to extremely high levels of particle pollution is<br>available <a>here</a>.</div>

<div class="abs" style="left:12px;top:296.6px;width:623.5px;height:0.8px;background:#b8b8b8"></div>
<div class="abs tab" style="left:12.4px;top:279.8px;width:62.2px;height:18.2px;line-height:19.4px;background:#fff;border:0.6px solid #b0b0b0;border-top:1.3px solid #024a83;border-bottom:0.6px solid #999;border-radius:2px 2px 0 0;box-sizing:border-box;"><span>AQI</span></div>
<div class="abs tab" style="left:77px;top:280px;width:97px;height:16.6px;line-height:20.4px;overflow:hidden;background:#d3d3d3;border-radius:1.5px 1.5px 0 0;"><span>Concentration</span></div>
<div class="abs tab" style="left:176px;top:280px;width:80px;height:16.6px;line-height:20.4px;overflow:hidden;background:#d3d3d3;border-radius:1.5px 1.5px 0 0;"><span>Historical</span></div>
<div class="abs" id="learn" style="left:12.5px;top:304px;font-size:8.15px;line-height:11px;color:#333;white-space:nowrap">Learn more about how the Air Quality Index [AQI] is calculated from the EPA <a>here</a>.</div>

<div class="abs" id="chart" style="left:12px;top:326.7px;width:467.3px;height:174px;background:#fff;overflow:hidden">
<svg class="abs" style="left:0;top:0" width="467.3" height="174" viewBox="0 0 467.3 174" font-family="'DejaVu Sans','Liberation Sans',sans-serif">
<text x="234.2" y="13.9" text-anchor="middle" font-size="9.5px" letter-spacing="0.38" fill="#333">Bishkek – PM2.5</text>
<path d="M44.5 142.30H461.0" stroke="#ccd6eb" stroke-width="0.6"/>
<text x="35.5" y="143.9" text-anchor="end" font-size="6.25px" fill="#333">0</text>
<path d="M44.5 121.00H461.0" stroke="#e6e6e6" stroke-width="0.6"/>
<text x="35.5" y="122.6" text-anchor="end" font-size="6.25px" fill="#333">100</text>
<path d="M44.5 99.70H461.0" stroke="#e6e6e6" stroke-width="0.6"/>
<text x="35.5" y="101.3" text-anchor="end" font-size="6.25px" fill="#333">200</text>
<path d="M44.5 78.40H461.0" stroke="#e6e6e6" stroke-width="0.6"/>
<text x="35.5" y="80.0" text-anchor="end" font-size="6.25px" fill="#333">300</text>
<path d="M44.5 57.10H461.0" stroke="#e6e6e6" stroke-width="0.6"/>
<text x="35.5" y="58.7" text-anchor="end" font-size="6.25px" fill="#333">400</text>
<path d="M44.5 35.80H461.0" stroke="#e6e6e6" stroke-width="0.6"/>
<text x="35.5" y="37.4" text-anchor="end" font-size="6.25px" fill="#333">500</text>
<text transform="translate(17.7,86.60000000000002) rotate(-90)" text-anchor="middle" font-size="7.4px" fill="#333">AQI</text>
<path d="M44.50 142.30v5.5" stroke="#ccd6eb" stroke-width="0.6"/>
<path d="M61.85 142.30v5.5" stroke="#ccd6eb" stroke-width="0.6"/>
<path d="M79.21 142.30v5.5" stroke="#ccd6eb" stroke-width="0.6"/>
<path d="M96.56 142.30v5.5" stroke="#ccd6eb" stroke-width="0.6"/>
<path d="M113.92 142.30v5.5" stroke="#ccd6eb" stroke-width="0.6"/>
<path d="M131.27 142.30v5.5" stroke="#ccd6eb" stroke-width="0.6"/>
<path d="M148.62 142.30v5.5" stroke="#ccd6eb" stroke-width="0.6"/>
<path d="M165.98 142.30v5.5" stroke="#ccd6eb" stroke-width="0.6"/>
<path d="M183.33 142.30v5.5" stroke="#ccd6eb" stroke-width="0.6"/>
<path d="M200.69 142.30v5.5" stroke="#ccd6eb" stroke-width="0.6"/>
<path d="M218.04 142.30v5.5" stroke="#ccd6eb" stroke-width="0.6"/>
<path d="M235.40 142.30v5.5" stroke="#ccd6eb" stroke-width="0.6"/>
<path d="M252.75 142.30v5.5" stroke="#ccd6eb" stroke-width="0.6"/>
<path d="M270.10 142.30v5.5" stroke="#ccd6eb" stroke-width="0.6"/>
<path d="M287.46 142.30v5.5" stroke="#ccd6eb" stroke-width="0.6"/>
<path d="M304.81 142.30v5.5" stroke="#ccd6eb" stroke-width="0.6"/>
<path d="M322.17 142.30v5.5" stroke="#ccd6eb" stroke-width="0.6"/>
<path d="M339.52 142.30v5.5" stroke="#ccd6eb" stroke-width="0.6"/>
<path d="M356.88 142.30v5.5" stroke="#ccd6eb" stroke-width="0.6"/>
<path d="M374.23 142.30v5.5" stroke="#ccd6eb" stroke-width="0.6"/>
<path d="M391.58 142.30v5.5" stroke="#ccd6eb" stroke-width="0.6"/>
<path d="M408.94 142.30v5.5" stroke="#ccd6eb" stroke-width="0.6"/>
<path d="M426.29 142.30v5.5" stroke="#ccd6eb" stroke-width="0.6"/>
<path d="M443.65 142.30v5.5" stroke="#ccd6eb" stroke-width="0.6"/>
<path d="M461.00 142.30v5.5" stroke="#ccd6eb" stroke-width="0.6"/>
<rect x="48.78" y="129.20" width="9.0" height="13.10" fill="#ffff00" stroke="#2a2a2a" stroke-width="0.55"/>
<text transform="translate(55.78,151.50) rotate(-45)" text-anchor="end" font-size="6.1px" fill="#666">8 PM</text>
<rect x="66.13" y="128.14" width="9.0" height="14.16" fill="#ffff00" stroke="#2a2a2a" stroke-width="0.55"/>
<text transform="translate(73.13,151.50) rotate(-45)" text-anchor="end" font-size="6.1px" fill="#666">9 PM</text>
<rect x="83.49" y="128.14" width="9.0" height="14.16" fill="#ffff00" stroke="#2a2a2a" stroke-width="0.55"/>
<text transform="translate(90.49,151.50) rotate(-45)" text-anchor="end" font-size="6.1px" fill="#666">10 PM</text>
<rect x="100.84" y="127.71" width="9.0" height="14.59" fill="#ffff00" stroke="#2a2a2a" stroke-width="0.55"/>
<text transform="translate(107.84,151.50) rotate(-45)" text-anchor="end" font-size="6.1px" fill="#666">11 PM</text>
<rect x="118.19" y="130.90" width="9.0" height="11.40" fill="#ffff00" stroke="#2a2a2a" stroke-width="0.55"/>
<text transform="translate(125.19,151.50) rotate(-45)" text-anchor="end" font-size="6.1px" fill="#666">3/31/2021 12 AM</text>
<rect x="135.55" y="132.82" width="9.0" height="9.48" fill="#00e400" stroke="#2a2a2a" stroke-width="0.55"/>
<text transform="translate(142.55,151.50) rotate(-45)" text-anchor="end" font-size="6.1px" fill="#666">1 AM</text>
<rect x="152.90" y="134.31" width="9.0" height="7.99" fill="#00e400" stroke="#2a2a2a" stroke-width="0.55"/>
<text transform="translate(159.90,151.50) rotate(-45)" text-anchor="end" font-size="6.1px" fill="#666">2 AM</text>
<rect x="170.26" y="134.53" width="9.0" height="7.77" fill="#00e400" stroke="#2a2a2a" stroke-width="0.55"/>
<text transform="translate(177.26,151.50) rotate(-45)" text-anchor="end" font-size="6.1px" fill="#666">3 AM</text>
<rect x="187.61" y="136.23" width="9.0" height="6.07" fill="#00e400" stroke="#2a2a2a" stroke-width="0.55"/>
<text transform="translate(194.61,151.50) rotate(-45)" text-anchor="end" font-size="6.1px" fill="#666">4 AM</text>
<rect x="204.96" y="136.23" width="9.0" height="6.07" fill="#00e400" stroke="#2a2a2a" stroke-width="0.55"/>
<text transform="translate(211.96,151.50) rotate(-45)" text-anchor="end" font-size="6.1px" fill="#666">5 AM</text>
<rect x="222.32" y="130.90" width="9.0" height="11.40" fill="#ffff00" stroke="#2a2a2a" stroke-width="0.55"/>
<text transform="translate(229.32,151.50) rotate(-45)" text-anchor="end" font-size="6.1px" fill="#666">6 AM</text>
<rect x="239.67" y="130.90" width="9.0" height="11.40" fill="#ffff00" stroke="#2a2a2a" stroke-width="0.55"/>
<text transform="translate(246.67,151.50) rotate(-45)" text-anchor="end" font-size="6.1px" fill="#666">7 AM</text>
<rect x="257.03" y="132.82" width="9.0" height="9.48" fill="#00e400" stroke="#2a2a2a" stroke-width="0.55"/>
<text transform="translate(264.03,151.50) rotate(-45)" text-anchor="end" font-size="6.1px" fill="#666">8 AM</text>
<rect x="274.38" y="135.80" width="9.0" height="6.50" fill="#00e400" stroke="#2a2a2a" stroke-width="0.55"/>
<text transform="translate(281.38,151.50) rotate(-45)" text-anchor="end" font-size="6.1px" fill="#666">9 AM</text>
<rect x="291.74" y="135.16" width="9.0" height="7.14" fill="#00e400" stroke="#2a2a2a" stroke-width="0.55"/>
<text transform="translate(298.74,151.50) rotate(-45)" text-anchor="end" font-size="6.1px" fill="#666">10 AM</text>
<rect x="309.09" y="133.67" width="9.0" height="8.63" fill="#00e400" stroke="#2a2a2a" stroke-width="0.55"/>
<text transform="translate(316.09,151.50) rotate(-45)" text-anchor="end" font-size="6.1px" fill="#666">11 AM</text>
<rect x="326.44" y="130.90" width="9.0" height="11.40" fill="#ffff00" stroke="#2a2a2a" stroke-width="0.55"/>
<text transform="translate(333.44,151.50) rotate(-45)" text-anchor="end" font-size="6.1px" fill="#666">12 PM</text>
<rect x="343.80" y="134.31" width="9.0" height="7.99" fill="#00e400" stroke="#2a2a2a" stroke-width="0.55"/>
<text transform="translate(350.80,151.50) rotate(-45)" text-anchor="end" font-size="6.1px" fill="#666">1 PM</text>
<rect x="361.15" y="134.31" width="9.0" height="7.99" fill="#00e400" stroke="#2a2a2a" stroke-width="0.55"/>
<text transform="translate(368.15,151.50) rotate(-45)" text-anchor="end" font-size="6.1px" fill="#666">2 PM</text>
<rect x="378.51" y="135.80" width="9.0" height="6.50" fill="#00e400" stroke="#2a2a2a" stroke-width="0.55"/>
<text transform="translate(385.51,151.50) rotate(-45)" text-anchor="end" font-size="6.1px" fill="#666">3 PM</text>
<rect x="395.86" y="135.80" width="9.0" height="6.50" fill="#00e400" stroke="#2a2a2a" stroke-width="0.55"/>
<text transform="translate(402.86,151.50) rotate(-45)" text-anchor="end" font-size="6.1px" fill="#666">4 PM</text>
<rect x="413.21" y="136.87" width="9.0" height="5.43" fill="#00e400" stroke="#2a2a2a" stroke-width="0.55"/>
<text transform="translate(420.21,151.50) rotate(-45)" text-anchor="end" font-size="6.1px" fill="#666">5 PM</text>
<rect x="430.57" y="135.80" width="9.0" height="6.50" fill="#00e400" stroke="#2a2a2a" stroke-width="0.55"/>
<text transform="translate(437.57,151.50) rotate(-45)" text-anchor="end" font-size="6.1px" fill="#666">6 PM</text>
<rect x="447.92" y="136.02" width="9.0" height="6.28" fill="#00e400" stroke="#2a2a2a" stroke-width="0.55"/>
<text transform="translate(454.92,151.50) rotate(-45)" text-anchor="end" font-size="6.1px" fill="#666">7 PM</text>
</svg>
</div>

<div class="abs" id="cc" style="left:488.8px;top:326.9px;width:147px;height:170.3px;box-sizing:border-box;border:0.7px solid #024a83;background:#eee;">
<div class="abs" style="left:0;top:0;width:100%;height:43px;background:#024a83;color:#fff;font-weight:bold;text-align:center;">
<div class="abs" style="left:0;width:100%;top:3.9px;font-size:8.75px;line-height:10px">Current Conditions</div>
<div class="abs" style="left:0;width:100%;top:17.7px;font-size:6.95px;line-height:10px">observed at</div>
<div class="abs" style="left:0;width:100%;top:28.2px;font-size:8.75px;line-height:10px">Mar 30, 2021 7:00 PM (LT)</div>
</div>
<div class="abs" style="left:0;top:43px;width:100%;height:66.7px;background:#00e400;color:#111;font-weight:bold;text-align:center;font-size:11.9px;line-height:16.7px;">
<div class="abs" style="left:0;width:100%;top:8.3px">31 AQI</div>
<div class="abs" style="left:0;width:100%;top:24.9px">Good</div>
<div class="abs" style="left:0;width:100%;top:41.5px">PM2.5</div>
</div>
<div class="abs" style="left:0;width:100%;top:116.6px;text-align:center;font-weight:bold;font-size:7.05px;line-height:10px;color:#333">Health Message</div>
<div class="abs" style="left:3.2px;top:129.5px;font-size:7px;line-height:12.35px;color:#444;white-space:nowrap">The AQI value for your community is<br>between 0 and 50. Air quality is satisfactory<br>and poses little or no health risk.</div>
</div>

</body></html>
